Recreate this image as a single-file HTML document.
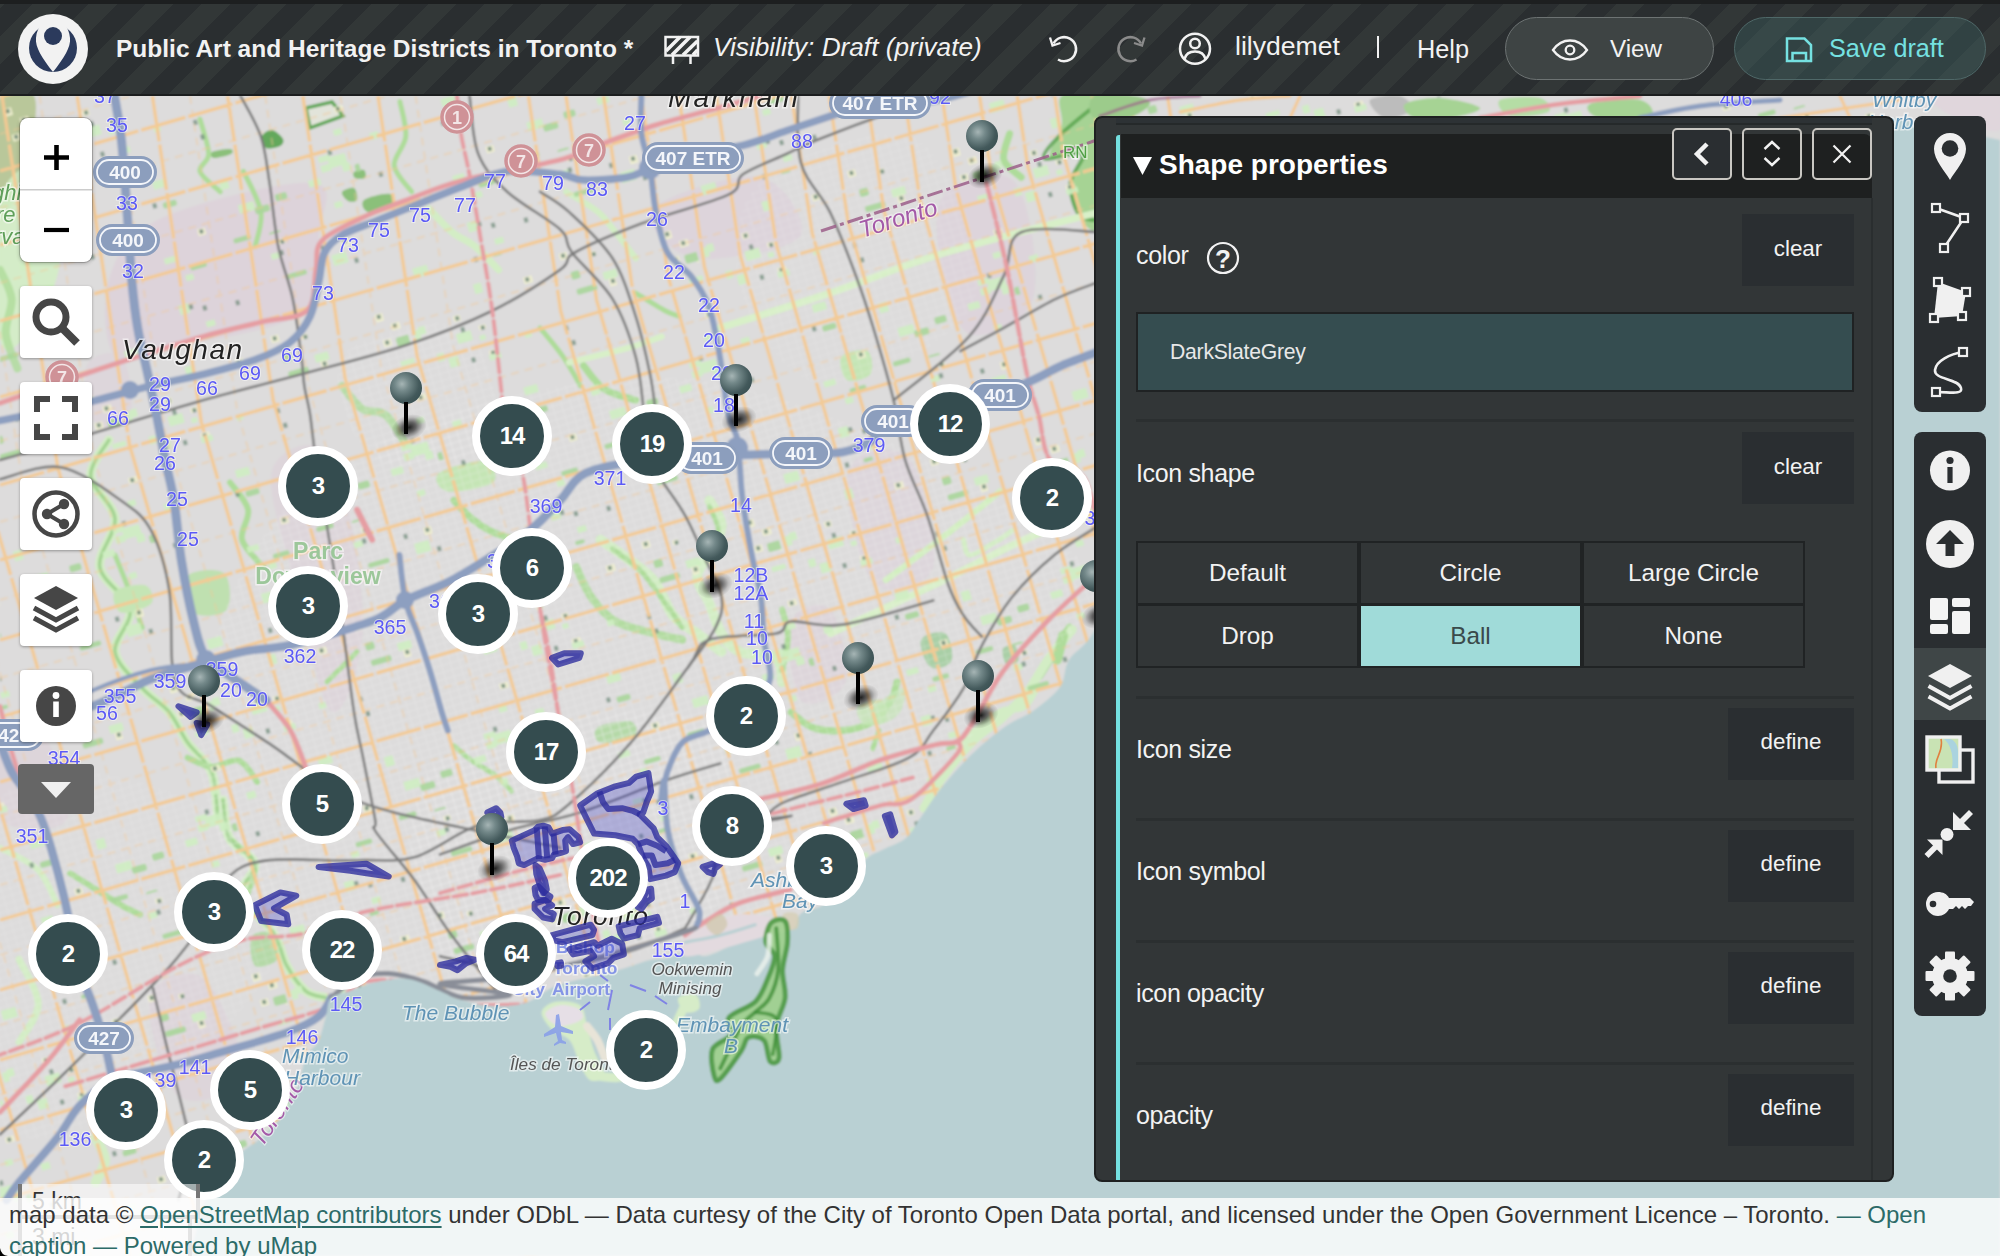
<!DOCTYPE html>
<html lang="en">
<head>
<meta charset="utf-8">
<title>Public Art and Heritage Districts in Toronto - uMap</title>
<style>
*{box-sizing:border-box;margin:0;padding:0}
html,body{width:2000px;height:1256px;overflow:hidden;background:#dcdcdc;font-family:"Liberation Sans",sans-serif;}
body{position:relative}
.abs{position:absolute}
/* ---------- top bar ---------- */
#topstrip{position:absolute;left:0;top:0;width:2000px;height:4px;background:#1d1f20;z-index:50}
#bar{position:absolute;left:0;top:4px;width:2000px;height:92px;z-index:49;
 background:repeating-linear-gradient(135deg,#323737 0,#323737 2.83px,#2a2e30 2.83px,#2a2e30 22.83px,#323737 22.83px,#323737 40px);
 border-bottom:2px solid #1b1d1e;color:#f2f2f2}
#bar .t{position:absolute;white-space:nowrap;line-height:1}
#logo{position:absolute;left:18px;top:10px;width:70px;height:70px}
.pill{position:absolute;top:13px;height:63px;border-radius:32px;border:1px solid #6d7373}
/* ---------- map ---------- */
#map{position:absolute;left:0;top:96px;width:2000px;height:1160px;overflow:hidden;background:#dddcdc}
#mapsvg{position:absolute;left:0;top:-96px}
/* leaflet-like controls */
.ctl{position:absolute;left:20px;width:72px;height:72px;background:#fff;border-radius:4px;box-shadow:0 1px 3px rgba(0,0,0,.35);z-index:20}
.ctl svg{position:absolute;left:0;top:0}
/* clusters */
.cl{position:absolute;width:80px;height:80px;margin:-39px 0 0 -39px;border-radius:50%;background:#344c4f;border:8px solid #fff;
 color:#fff;font-weight:bold;font-size:24px;line-height:64px;text-align:center;z-index:10;letter-spacing:-1px}
/* ball markers */
.ball{position:absolute;width:32px;height:32px;margin:-15px 0 0 -15px;border-radius:50%;z-index:9;
 background:radial-gradient(circle at 12px 12px,#a6b5b5 0,#74898a 25%,#43595b 60%,#2f4648 100%)}
.ball:before{content:"";position:absolute;left:14px;top:30px;width:4px;height:32px;background:#000}
.ball:after{content:"";position:absolute;left:1px;top:43px;width:36px;height:25px;border-radius:50%;
 background:radial-gradient(ellipse at center,rgba(0,0,0,.85) 0,rgba(0,0,0,.55) 28%,rgba(0,0,0,.15) 55%,rgba(0,0,0,0) 72%);transform:rotate(-20deg);z-index:-1}
/* ---------- panel ---------- */
#panel{position:absolute;left:1094px;top:116px;width:800px;height:1066px;background:#323637;border:2px solid #1e2021;border-radius:8px;z-index:30;color:#f2f2f2;overflow:hidden}
#panel .lbl{position:absolute;left:40px;font-size:25px;letter-spacing:-.35px;line-height:1;white-space:nowrap}
#panel .sep{position:absolute;left:40px;width:718px;height:3px;background:#2b2f30}
#panel .btn{position:absolute;background:#2a2e31;font-size:22.4px;text-align:center;white-space:nowrap}
.hb{position:absolute;top:9.5px;width:60px;height:52px;border:2px solid #c9c7c2;border-radius:5px}
.cell{position:absolute;width:223px;height:64px;border:2px solid #202324;font-size:24.3px;line-height:59px;text-align:center;color:#f2f2f2}
/* ---------- toolbars ---------- */
.tb{position:absolute;left:1914px;width:72px;background:#2a2e31;border-radius:8px;z-index:30}
/* ---------- attribution ---------- */
#attr{position:absolute;left:0;top:1198px;width:2000px;height:58px;background:rgba(255,255,255,.8);z-index:40;color:#333;font-size:24px;line-height:31px;padding:1px 0 0 9px;white-space:nowrap}
#attr .lk{color:#2c6b68}
#attr u{text-decoration-thickness:2px;text-underline-offset:3px}
</style>
</head>
<body>
<div id="topstrip"></div>
<div id="bar">
  <svg id="logo" viewBox="0 0 70 70">
    <circle cx="35" cy="35" r="35" fill="#f2f2f2"/>
    <circle cx="35" cy="34" r="24" fill="#2b3a5c"/>
    <path d="M35 58 C 24 44 17 33 18 24 C 19 12 26 6 35 6 C 44 6 51 12 52 24 C 53 33 46 44 35 58 Z" fill="#f2f2f2"/>
    <circle cx="35" cy="22" r="9" fill="#2b3a5c"/>
  </svg>
  <div class="t" id="title" style="left:116px;top:33.3px;font-size:24.5px;font-weight:bold;">Public Art and Heritage Districts in Toronto *</div>
  <div class="t" id="vis" style="left:713px;top:30.3px;font-size:26.2px;font-style:italic;">Visibility: Draft (private)</div>
  <div class="t" id="user" style="left:1235px;top:29px;font-size:26.6px;">lilydemet</div>
  <div class="abs" id="pipe" style="left:1376.5px;top:31.5px;width:2.2px;height:22.5px;background:#f2f2f2"></div>
  <div class="t" id="help" style="left:1417px;top:32.6px;font-size:25.3px;">Help</div>
  <div class="pill" style="left:1505px;width:209px;background:#3e4444"></div>
  <div class="pill" style="left:1734px;width:252px;background:rgba(70,120,120,.28);border-color:#4f6868"></div>
  <svg class="abs" id="topicons" style="left:0;top:-4px" width="2000" height="96" viewBox="0 0 2000 96" fill="none" stroke="#f2f2f2" stroke-width="2.5">
    <!-- barrier -->
    <rect x="665.500" y="37" width="32.500" height="18.500"/>
    <path d="M673 55.500V64M690.500 55.500V64"/>
    <path d="M666 51L680 37M672 55L690 37M683 55L697.500 41M693 55L697.500 50" stroke-width="3.6"/>
    <!-- undo -->
    <path d="M1053.500 43.500A12 12 0 1 1 1058 59.500"/>
    <path d="M1050 37.500L1052.500 45.500L1060.500 43" stroke-width="2.3"/>
    <!-- redo -->
    <g stroke="#8b8b8b"><path d="M1141 43.500A12 12 0 1 0 1136.500 59.500"/><path d="M1144.500 37.500L1142 45.500L1134 43" stroke-width="2.3"/></g>
    <!-- user -->
    <circle cx="1195" cy="48.800" r="15"/>
    <circle cx="1195" cy="43.500" r="4.800"/>
    <path d="M1184.500 59C1186 53 1191 51.500 1195 51.500C1199 51.500 1204 53 1205.500 59"/>
    <!-- eye -->
    <path d="M1553 50C1558 43 1564 40.500 1570 40.500C1576 40.500 1582 43 1587 50C1582 57 1576 59.500 1570 59.500C1564 59.500 1558 57 1553 50Z" stroke-width="2.3"/>
    <circle cx="1570" cy="50" r="4.300" stroke-width="2.300"/>
    <!-- save -->
    <g stroke="#75e1e1"><path d="M1787 38.500H1804.500L1811 45V61H1787Z"/><path d="M1792.500 61V53H1806V61"/></g>
  </svg>
  <div class="t" id="view" style="left:1610px;top:32.5px;font-size:24.2px;">View</div>
  <div class="t" id="save" style="left:1829px;top:31.7px;font-size:25.2px;color:#75e1e1">Save draft</div>
</div>

<div id="map">
<svg id="mapsvg" width="2000" height="1256" viewBox="0 0 2000 1256"><g filter="url(#soft)">
  <rect width="2000" height="1256" fill="#dddcdc"/>
  <!--MAP-->
<path d="M162.3 217.7 C196.1 202.2 286.9 180.1 313.0 183.0 C339.1 185.9 319.8 213.8 318.8 235.1 C317.8 256.4 329.4 292.1 307.2 310.5 C285.0 328.9 217.4 337.6 185.5 345.3 C153.6 353.0 128.5 368.5 115.9 356.9 C103.3 345.3 102.4 298.9 110.1 275.7 C117.8 252.5 128.5 233.1 162.3 217.7Z" fill="#ddd3da" opacity="1"/>
<path d="M272.3 470.3 C278.4 448.1 317.7 433.0 332.8 458.2 C347.9 483.4 363.1 579.1 363.1 621.5 C363.1 663.9 343.9 717.3 332.8 712.3 C321.7 707.3 306.6 631.6 296.5 591.3 C286.4 551.0 266.2 492.5 272.3 470.3Z" fill="#ddd3da" opacity="0.8"/>
<path d="M655.9 206.1 C670.9 194.5 736.1 172.4 760.3 177.2 C784.5 182.0 807.7 221.6 800.9 235.1 C794.1 248.6 741.5 256.4 719.7 258.3 C698.0 260.2 681.0 255.4 670.4 246.7 C659.8 238.0 640.9 217.7 655.9 206.1Z" fill="#ddd3da" opacity="0.9"/>
<path d="M945.8 191.7 C958.4 179.1 1000.9 165.1 1015.4 183.0 C1029.9 200.9 1040.5 273.8 1032.8 298.9 C1025.1 324.0 984.5 340.5 969.0 333.7 C953.5 326.9 943.9 282.0 940.0 258.3 C936.1 234.6 933.2 204.2 945.8 191.7Z" fill="#ddd3da" opacity="0.9"/>
<path d="M791.1 621.5 C796.1 606.4 821.4 599.3 830.5 609.4 C839.6 619.5 850.6 667.0 845.6 682.1 C840.6 697.2 809.3 710.3 800.2 700.2 C791.1 690.1 786.1 636.6 791.1 621.5Z" fill="#ddd3da" opacity="0.8"/>
<path d="M848.6 470.3 C854.7 449.6 895.0 442.1 909.1 458.2 C923.2 474.3 939.3 546.4 933.3 567.1 C927.2 587.8 886.9 598.3 872.8 582.2 C858.7 566.1 842.5 491.0 848.6 470.3Z" fill="#ddd3da" opacity="0.7"/>
<path d="M149.7 997.5 C153.9 977.9 188.5 965.6 203.9 978.4 C219.3 991.1 246.3 1054.3 242.1 1074.0 C237.8 1093.7 193.8 1109.0 178.4 1096.3 C163.0 1083.5 145.4 1017.1 149.7 997.5Z" fill="#ddd3da" opacity="0.8"/>
<path d="M0.0 751.6 C7.6 738.2 34.3 728.1 45.4 739.5 C56.5 750.9 74.2 806.6 66.6 820.0 C59.0 833.4 11.1 831.4 0.0 820.0 C-11.1 808.6 -7.6 765.0 0.0 751.6Z" fill="#ddd3da" opacity="0.8"/>
<path d="M87.0 365.6 C91.3 354.5 114.5 348.7 121.7 356.9 C128.9 365.1 134.7 403.7 130.4 414.8 C126.1 425.9 102.9 431.7 95.7 423.5 C88.5 415.3 82.7 376.7 87.0 365.6Z" fill="#ddd3da" opacity="0.7"/>
<path d="M0.0 96.0 C5.7 77.0 29.0 87.0 34.0 96.0 C39.0 105.0 33.3 132.7 30.0 150.0 C26.7 167.3 19.0 190.0 14.0 200.0 C9.0 210.0 2.3 227.3 0.0 210.0 C-2.3 192.7 -5.7 115.0 0.0 96.0Z" fill="#b9c79a" opacity="1"/>
<path d="M0.0 200.0 C6.7 171.7 30.0 160.0 40.0 170.0 C50.0 180.0 61.7 233.3 60.0 260.0 C58.3 286.7 40.0 316.7 30.0 330.0 C20.0 343.3 5.0 361.7 0.0 340.0 C-5.0 318.3 -6.7 228.3 0.0 200.0Z" fill="#d3edc5" opacity="0.9"/>
<path d="M1061.7 96.0 C1068.1 91.2 1093.6 75.2 1100.0 96.0 C1106.4 116.8 1103.5 200.3 1100.0 220.6 C1096.5 240.9 1084.0 224.0 1079.1 217.7 C1074.2 211.4 1069.9 193.6 1070.4 183.0 C1070.9 172.4 1085.4 158.3 1082.0 154.0 C1078.6 149.7 1053.5 161.7 1050.1 156.9 C1046.7 152.1 1059.8 135.2 1061.7 125.0 C1063.6 114.8 1055.3 100.8 1061.7 96.0Z" fill="#a6d394" opacity="1"/>
<path d="M1100.0 101.8 C1093.6 107.1 1071.0 124.3 1061.7 133.7 C1052.4 143.1 1040.9 154.9 1044.3 158.3 C1047.7 161.7 1077.7 149.9 1082.0 154.0 C1086.3 158.1 1070.9 172.9 1070.4 183.0 C1069.9 193.1 1074.2 208.5 1079.1 214.8 C1084.0 221.1 1096.5 219.6 1100.0 220.6" fill="none" stroke="#4f9f45" stroke-width="4" opacity=".75"/>
<path d="M306.0 108.0 L332.0 102.0 L343.0 116.0 L310.0 128.0Z" fill="#e4e6da" stroke="#4f9f45" stroke-width="3.5" opacity=".85"/>
<path d="M262.0 136.0 C263.0 133.0 268.5 129.5 272.0 130.0 C275.5 130.5 281.7 136.3 283.0 139.0 C284.3 141.7 282.8 144.5 280.0 146.0 C277.2 147.5 269.0 149.7 266.0 148.0 C263.0 146.3 261.0 139.0 262.0 136.0Z" fill="#4f9f45" opacity="0.85"/>
<path d="M364.0 200.0 C367.7 197.0 385.3 192.7 390.0 194.0 C394.7 195.3 395.7 205.0 392.0 208.0 C388.3 211.0 372.7 213.3 368.0 212.0 C363.3 210.7 360.3 203.0 364.0 200.0Z" fill="#8bc07a" opacity="1"/>
<path d="M354.0 172.0 C355.5 170.7 362.2 169.0 364.0 170.0 C365.8 171.0 366.5 176.7 365.0 178.0 C363.5 179.3 356.8 179.0 355.0 178.0 C353.2 177.0 352.5 173.3 354.0 172.0Z" fill="#8bc07a" opacity="1"/>
<path d="M342.0 192.0 C343.0 189.8 351.5 186.7 354.0 188.0 C356.5 189.3 358.0 197.8 357.0 200.0 C356.0 202.2 350.5 202.3 348.0 201.0 C345.5 199.7 341.0 194.2 342.0 192.0Z" fill="#8bc07a" opacity="1"/>
<path d="M212.0 152.0 C214.7 150.5 226.8 148.7 230.0 149.0 C233.2 149.3 233.7 152.5 231.0 154.0 C228.3 155.5 217.2 158.3 214.0 158.0 C210.8 157.7 209.3 153.5 212.0 152.0Z" fill="#8bc07a" opacity="1"/>
<path d="M108.9 440.0 C105.9 446.1 89.8 463.2 90.8 476.3 C91.8 489.4 113.5 503.6 115.0 518.7 C116.5 533.8 97.3 552.0 99.8 567.1 C102.3 582.2 127.6 595.3 130.1 609.4 C132.6 623.5 113.0 638.7 115.0 651.8 C117.0 664.9 133.1 678.0 142.2 688.1 C151.3 698.2 161.8 703.2 169.4 712.3 C177.0 721.4 180.5 732.5 187.6 742.6 C194.7 752.7 206.8 759.9 211.8 772.8 C216.9 785.7 216.9 812.1 217.9 820.0" fill="none" stroke="#d3edc5" stroke-width="9" stroke-linecap="round" stroke-linejoin="round" opacity="1"/>
<path d="M115.0 555.0 C117.0 560.0 122.6 573.1 127.1 585.2 C131.6 597.3 139.7 620.5 142.2 627.6" fill="none" stroke="#aedc9a" stroke-width="5" stroke-linecap="round" stroke-linejoin="round" opacity="1"/>
<path d="M223.0 800.0 C224.1 806.4 224.1 827.6 229.4 838.2 C234.7 848.8 252.8 854.1 254.9 863.7 C257.0 873.3 238.9 883.9 242.1 895.6 C245.3 907.3 266.6 922.1 274.0 933.8 C281.4 945.5 281.4 956.2 286.7 965.7 C292.0 975.2 299.4 985.8 305.8 991.1 C312.2 996.4 321.7 996.4 324.9 997.5" fill="none" stroke="#d3edc5" stroke-width="9" stroke-linecap="round" stroke-linejoin="round" opacity="1"/>
<path d="M229.4 838.2 C233.7 842.5 251.7 854.7 254.9 863.7 C258.1 872.7 249.6 887.6 248.5 892.4" fill="none" stroke="#aedc9a" stroke-width="5" stroke-linecap="round" stroke-linejoin="round" opacity="1"/>
<path d="M108.9 440.0 C105.9 446.1 89.8 463.2 90.8 476.3 C91.8 489.4 113.5 503.6 115.0 518.7 C116.5 533.8 97.3 552.0 99.8 567.1 C102.3 582.2 127.6 595.3 130.1 609.4 C132.6 623.5 113.0 638.7 115.0 651.8 C117.0 664.9 133.1 678.0 142.2 688.1 C151.3 698.2 161.8 703.2 169.4 712.3 C177.0 721.4 180.5 732.5 187.6 742.6 C194.7 752.7 206.8 759.9 211.8 772.8 C216.9 785.7 216.9 812.1 217.9 820.0" fill="none" stroke="#9fd08d" stroke-width="3.5" stroke-linecap="round" stroke-linejoin="round" opacity="0.9"/>
<path d="M223.0 800.0 C224.1 806.4 224.1 827.6 229.4 838.2 C234.7 848.8 252.8 854.1 254.9 863.7 C257.0 873.3 238.9 883.9 242.1 895.6 C245.3 907.3 266.6 922.1 274.0 933.8 C281.4 945.5 281.4 956.2 286.7 965.7 C292.0 975.2 299.4 985.8 305.8 991.1 C312.2 996.4 321.7 996.4 324.9 997.5" fill="none" stroke="#9fd08d" stroke-width="3.5" stroke-linecap="round" stroke-linejoin="round" opacity="0.9"/>
<path d="M709.4 500.5 C711.4 504.5 721.0 516.6 721.5 524.7 C722.0 532.8 716.5 540.3 712.5 548.9 C708.5 557.5 697.8 567.1 697.3 576.2 C696.8 585.3 705.4 593.8 709.4 603.4 C713.4 613.0 716.5 625.5 721.5 633.6 C726.5 641.7 730.6 647.8 739.7 651.8 C748.8 655.8 768.9 652.8 776.0 657.9 C783.1 663.0 781.1 678.1 782.1 682.1" fill="none" stroke="#9fd08d" stroke-width="4" stroke-linecap="round" stroke-linejoin="round" opacity="0.9"/>
<path d="M600.5 539.8 C605.5 543.3 621.7 553.9 630.8 561.0 C639.9 568.1 648.0 573.1 655.0 582.2 C662.0 591.3 666.1 606.9 673.1 615.5 C680.1 624.1 689.2 627.6 697.3 633.6 C705.4 639.6 717.5 648.8 721.5 651.8" fill="none" stroke="#9fd08d" stroke-width="4" stroke-linecap="round" stroke-linejoin="round" opacity="0.9"/>
<path d="M230.0 482.4 C233.0 486.9 246.1 500.0 248.1 509.6 C250.1 519.2 239.6 530.2 242.1 539.8 C244.6 549.4 259.7 562.5 263.2 567.1" fill="none" stroke="#aedc9a" stroke-width="6" stroke-linecap="round" stroke-linejoin="round" opacity="1"/>
<path d="M453.9 500.5 C456.9 503.5 465.9 513.7 472.0 518.7 C478.1 523.8 483.1 527.3 490.2 530.8 C497.3 534.3 510.4 538.3 514.4 539.8" fill="none" stroke="#aedc9a" stroke-width="7" stroke-linecap="round" stroke-linejoin="round" opacity="1"/>
<path d="M357.0 651.8 C354.0 654.8 343.9 665.0 338.9 670.0 C333.9 675.0 328.8 680.1 326.8 682.1" fill="none" stroke="#aedc9a" stroke-width="5" stroke-linecap="round" stroke-linejoin="round" opacity="1"/>
<path d="M187.6 757.7 C191.6 759.2 203.2 766.3 211.8 766.8 C220.4 767.3 231.4 758.2 239.0 760.7 C246.6 763.2 254.2 778.4 257.2 781.9" fill="none" stroke="#aedc9a" stroke-width="6" stroke-linecap="round" stroke-linejoin="round" opacity="1"/>
<path d="M453.9 745.6 C456.9 748.1 464.9 755.7 472.0 760.7 C479.1 765.8 489.6 770.9 496.2 775.9 C502.8 780.9 508.8 788.5 511.3 791.0" fill="none" stroke="#aedc9a" stroke-width="5" stroke-linecap="round" stroke-linejoin="round" opacity="1"/>
<path d="M709.4 500.5 C711.4 504.5 721.0 516.6 721.5 524.7 C722.0 532.8 716.5 540.3 712.5 548.9 C708.5 557.5 697.8 567.1 697.3 576.2 C696.8 585.3 705.4 593.8 709.4 603.4 C713.4 613.0 716.5 625.5 721.5 633.6 C726.5 641.7 730.6 647.8 739.7 651.8 C748.8 655.8 768.9 652.8 776.0 657.9 C783.1 663.0 781.1 678.1 782.1 682.1" fill="none" stroke="#d3edc5" stroke-width="10" stroke-linecap="round" stroke-linejoin="round" opacity="1"/>
<path d="M600.5 539.8 C605.5 543.3 621.7 553.9 630.8 561.0 C639.9 568.1 648.0 573.1 655.0 582.2 C662.0 591.3 666.1 606.9 673.1 615.5 C680.1 624.1 689.2 627.6 697.3 633.6 C705.4 639.6 717.5 648.8 721.5 651.8" fill="none" stroke="#d3edc5" stroke-width="10" stroke-linecap="round" stroke-linejoin="round" opacity="1"/>
<path d="M612.6 548.9 C617.1 552.4 631.7 562.0 639.8 570.1 C647.9 578.2 653.9 587.7 661.0 597.3 C668.1 606.9 678.7 622.5 682.2 627.6" fill="none" stroke="#aedc9a" stroke-width="5" stroke-linecap="round" stroke-linejoin="round" opacity="1"/>
<path d="M576.3 567.1 C578.8 572.1 584.8 588.2 591.4 597.3 C598.0 606.4 605.0 615.5 615.6 621.5 C626.2 627.5 643.9 630.6 655.0 633.6 C666.1 636.6 677.7 638.7 682.2 639.7" fill="none" stroke="#aedc9a" stroke-width="8" stroke-linecap="round" stroke-linejoin="round" opacity="0.9"/>
<path d="M782.1 609.4 C783.1 614.0 788.1 626.6 788.1 636.7 C788.1 646.8 783.1 664.5 782.1 670.0" fill="none" stroke="#aedc9a" stroke-width="6" stroke-linecap="round" stroke-linejoin="round" opacity="1"/>
<path d="M709.4 506.6 C710.9 510.6 718.5 522.7 718.5 530.8 C718.5 538.9 710.9 551.0 709.4 555.0" fill="none" stroke="#aedc9a" stroke-width="5" stroke-linecap="round" stroke-linejoin="round" opacity="1"/>
<path d="M791.1 712.3 C794.6 714.8 803.7 724.4 812.3 727.4 C820.9 730.4 832.5 731.5 842.6 730.5 C852.7 729.5 864.7 726.4 872.8 721.4 C880.9 716.4 887.0 706.8 891.0 700.2 C895.0 693.7 896.0 685.1 897.0 682.1" fill="none" stroke="#aedc9a" stroke-width="7" stroke-linecap="round" stroke-linejoin="round" opacity="1"/>
<path d="M878.9 730.5 L872.8 748.6" fill="none" stroke="#aedc9a" stroke-width="5" stroke-linecap="round" stroke-linejoin="round" opacity="1"/>
<path d="M1012.0 530.8 C1009.0 532.8 1000.9 538.9 993.9 542.9 C986.9 546.9 974.8 555.5 969.7 555.0 C964.7 554.5 964.6 542.3 963.6 539.8" fill="none" stroke="#d3edc5" stroke-width="5" stroke-linecap="round" stroke-linejoin="round" opacity="1"/>
<path d="M1036.2 688.1 C1034.2 691.1 1030.1 702.3 1024.1 706.3 C1018.0 710.3 1008.0 708.3 999.9 712.3 C991.8 716.3 981.8 725.0 975.7 730.5 C969.7 736.0 965.6 743.1 963.6 745.6" fill="none" stroke="#d3edc5" stroke-width="7" stroke-linecap="round" stroke-linejoin="round" opacity="1"/>
<path d="M1069.5 627.6 C1067.0 631.6 1059.5 643.7 1054.4 651.8 C1049.4 659.9 1041.7 672.0 1039.2 676.0" fill="none" stroke="#aedc9a" stroke-width="8" stroke-linecap="round" stroke-linejoin="round" opacity="1"/>
<path d="M200.0 119.2 C201.4 125.0 208.7 145.3 208.7 154.0 C208.7 162.7 198.1 165.1 200.0 171.4 C201.9 177.7 216.9 188.3 220.3 191.7" fill="none" stroke="#aedc9a" stroke-width="5" stroke-linecap="round" stroke-linejoin="round" opacity="1"/>
<path d="M243.5 171.4 C246.4 178.2 259.0 199.4 260.9 211.9 C262.8 224.4 256.1 240.9 255.1 246.7" fill="none" stroke="#aedc9a" stroke-width="5" stroke-linecap="round" stroke-linejoin="round" opacity="1"/>
<path d="M400.0 101.8 C401.0 107.6 406.8 126.0 405.8 136.6 C404.8 147.2 393.2 156.4 394.2 165.6 C395.2 174.8 408.7 187.3 411.6 191.7" fill="none" stroke="#aedc9a" stroke-width="5" stroke-linecap="round" stroke-linejoin="round" opacity="1"/>
<path d="M429.0 209.0 C432.9 212.9 444.5 225.9 452.2 232.2 C459.9 238.5 467.7 240.4 475.4 246.7 C483.1 253.0 494.7 266.0 498.6 269.9" fill="none" stroke="#d3edc5" stroke-width="7" stroke-linecap="round" stroke-linejoin="round" opacity="1"/>
<path d="M342.0 385.9 C345.4 389.8 355.1 404.2 362.3 409.0 C369.6 413.8 378.2 409.0 385.5 414.8 C392.8 420.6 402.4 439.0 405.8 443.8" fill="none" stroke="#aedc9a" stroke-width="8" stroke-linecap="round" stroke-linejoin="round" opacity="0.8"/>
<path d="M0.0 269.9 C1.9 274.7 10.6 288.3 11.6 298.9 C12.6 309.5 4.8 322.1 5.8 333.7 C6.8 345.3 15.5 362.7 17.4 368.5" fill="none" stroke="#aedc9a" stroke-width="8" stroke-linecap="round" stroke-linejoin="round" opacity="0.8"/>
<path d="M566.1 191.7 C571.4 195.1 589.8 205.2 598.0 211.9 C606.2 218.7 609.1 224.5 615.4 232.2 C621.7 239.9 632.3 254.0 635.7 258.3" fill="none" stroke="#d3edc5" stroke-width="6" stroke-linecap="round" stroke-linejoin="round" opacity="1"/>
<path d="M635.7 293.1 C640.5 296.0 657.4 306.6 664.6 310.5 C671.8 314.4 676.7 315.3 679.1 316.3" fill="none" stroke="#aedc9a" stroke-width="5" stroke-linecap="round" stroke-linejoin="round" opacity="1"/>
<path d="M583.5 365.6 C586.9 369.5 595.1 383.0 603.8 388.8 C612.5 394.6 630.4 398.4 635.7 400.3" fill="none" stroke="#aedc9a" stroke-width="7" stroke-linecap="round" stroke-linejoin="round" opacity="1"/>
<path d="M540.0 327.9 C543.9 332.7 556.4 347.2 563.2 356.9 C570.0 366.6 577.7 381.1 580.6 385.9" fill="none" stroke="#aedc9a" stroke-width="5" stroke-linecap="round" stroke-linejoin="round" opacity="1"/>
<path d="M1009.6 133.7 C1008.6 138.0 1001.9 152.6 1003.8 159.8 C1005.7 167.1 1018.3 174.3 1021.2 177.2" fill="none" stroke="#aedc9a" stroke-width="7" stroke-linecap="round" stroke-linejoin="round" opacity="1"/>
<path d="M719.7 327.9 C738.1 322.1 792.2 305.7 829.9 293.1 C867.6 280.5 900.8 266.0 945.8 252.5 C990.8 239.0 1074.3 218.7 1100.0 211.9" fill="none" stroke="#d8f0c8" stroke-width="7" stroke-linecap="round" stroke-linejoin="round" opacity="1"/>
<path d="M830.5 633.6 C847.6 625.5 901.0 600.8 933.3 585.2 C965.6 569.6 996.3 552.4 1024.1 539.8 C1051.9 527.2 1087.4 514.6 1100.1 509.6" fill="none" stroke="#d8f0c8" stroke-width="7" stroke-linecap="round" stroke-linejoin="round" opacity="1"/>
<path d="M569.0 362.7 C578.7 360.3 611.5 352.5 627.0 348.2 C642.5 343.9 655.9 338.5 661.7 336.6" fill="none" stroke="#d8f0c8" stroke-width="6" stroke-linecap="round" stroke-linejoin="round" opacity="1"/>
<path d="M885.9 580.0 C892.4 575.1 912.2 560.5 925.1 550.7 C938.0 540.9 950.8 531.0 963.3 521.1 C975.8 511.2 993.8 496.4 999.9 491.5" fill="none" stroke="#d2efc0" stroke-width="6" stroke-linecap="round" stroke-linejoin="round" opacity="1"/>
<path d="M187.6 576.2 C192.7 569.6 217.3 567.6 223.9 573.1 C230.5 578.6 232.0 602.8 226.9 609.4 C221.8 616.0 200.2 618.0 193.6 612.5 C187.0 607.0 182.5 582.8 187.6 576.2Z" fill="#bfe0b0" opacity="1"/>
<path d="M251.7 937.0 C254.3 931.7 266.6 930.1 270.8 933.8 C275.1 937.5 279.8 954.0 277.2 959.3 C274.6 964.6 259.1 969.4 254.9 965.7 C250.7 962.0 249.0 942.3 251.7 937.0Z" fill="#b5d9a8" opacity="1"/>
<path d="M921.2 639.7 C923.7 634.2 940.4 630.1 945.4 633.6 C950.4 637.1 954.0 655.4 951.5 660.9 C949.0 666.4 935.3 670.4 930.3 666.9 C925.2 663.4 918.7 645.2 921.2 639.7Z" fill="#a9cfa6" opacity="1"/>
<path d="M1002.9 648.8 C1004.4 645.8 1012.5 643.7 1015.0 645.7 C1017.5 647.7 1019.6 657.9 1018.1 660.9 C1016.6 663.9 1008.5 665.9 1006.0 663.9 C1003.5 661.9 1001.4 651.8 1002.9 648.8Z" fill="#a9cfa6" opacity="1"/>
<path d="M597.5 727.4 C602.5 723.9 624.8 719.9 630.8 721.4 C636.8 722.9 638.8 733.0 633.8 736.5 C628.8 740.0 606.5 744.1 600.5 742.6 C594.5 741.1 592.5 730.9 597.5 727.4Z" fill="#b5d9a8" opacity="1"/>
<path d="M857.7 706.3 C860.7 702.3 877.4 697.7 881.9 700.2 C886.4 702.7 887.9 717.4 884.9 721.4 C881.9 725.4 868.3 726.9 863.8 724.4 C859.3 721.9 854.7 710.3 857.7 706.3Z" fill="#c5e5b5" opacity="0.8"/>
<path d="M438.7 473.3 C444.8 468.3 475.0 459.7 484.1 461.2 C493.2 462.7 499.2 477.4 493.2 482.4 C487.1 487.4 456.9 492.9 447.8 491.4 C438.7 489.9 432.6 478.3 438.7 473.3Z" fill="#c5e5b5" opacity="1"/>
<path d="M115.0 591.3 C119.0 586.8 139.1 583.2 145.2 585.2 C151.2 587.2 155.3 598.9 151.3 603.4 C147.3 607.9 127.0 614.5 121.0 612.5 C115.0 610.5 111.0 595.8 115.0 591.3Z" fill="#c5e5b5" opacity="1"/>
<path d="M841.4 356.9 C844.8 352.1 862.7 348.2 867.5 351.1 C872.3 354.0 873.8 369.5 870.4 374.3 C867.0 379.1 852.0 383.0 847.2 380.1 C842.4 377.2 838.0 361.7 841.4 356.9Z" fill="#c5e5b5" opacity="1"/>
<path d="M872.8 709.3 C876.8 703.2 898.5 687.6 903.1 688.1 C907.7 688.6 904.1 706.2 900.1 712.3 C896.1 718.3 883.5 724.9 878.9 724.4 C874.3 723.9 868.8 715.3 872.8 709.3Z" fill="#c5e5b5" opacity="0.7"/>
<path d="M1072.2 629.6 C1068.2 634.6 1055.6 649.2 1048.0 659.8 C1040.4 670.4 1034.4 683.5 1026.8 693.1 C1019.2 702.7 1011.7 709.2 1002.6 717.3 C993.5 725.4 982.4 731.4 972.3 741.5 C962.2 751.6 950.2 766.8 942.1 777.9 C934.0 789.0 926.9 803.1 923.9 808.1" fill="none" stroke="#d3edc5" stroke-width="9" stroke-linecap="round" stroke-linejoin="round" opacity="1"/>
<path d="M1063.1 635.6 L1057.0 659.8" fill="none" stroke="#aedc9a" stroke-width="10" stroke-linecap="round" stroke-linejoin="round" opacity="1"/>
<path d="M19.1 959.3 C22.3 966.7 38.2 990.1 38.2 1003.9 C38.2 1017.7 22.3 1035.7 19.1 1042.1" fill="none" stroke="#d3edc5" stroke-width="7" stroke-linecap="round" stroke-linejoin="round" opacity="1"/>
<path d="M0.0 847.8 C6.4 851.5 28.7 860.5 38.2 870.1 C47.8 879.7 54.1 899.3 57.3 905.1" fill="none" stroke="#d3edc5" stroke-width="6" stroke-linecap="round" stroke-linejoin="round" opacity="1"/>
<path d="M70.1 873.3 C74.3 875.9 87.1 883.9 95.6 889.2 C104.1 894.5 113.7 900.9 121.1 905.1 C128.5 909.4 137.0 913.1 140.2 914.7" fill="none" stroke="#aedc9a" stroke-width="6" stroke-linecap="round" stroke-linejoin="round" opacity="1"/>
<path d="M95.6 1137.7 C97.2 1141.4 105.1 1152.6 105.1 1160.0 C105.1 1167.4 97.2 1178.6 95.6 1182.3" fill="none" stroke="#d3edc5" stroke-width="10" stroke-linecap="round" stroke-linejoin="round" opacity="1"/>
<defs><pattern id="specks" width="300" height="300" patternUnits="userSpaceOnUse" patternTransform="rotate(-16)"><rect x="97" y="45" width="4" height="5" fill="#6d8a78" opacity=".8"/><rect x="22" y="161" width="7" height="8" fill="#cfeec2"/><rect x="11" y="130" width="7" height="8" fill="#cfeec2"/><rect x="248" y="37" width="15" height="11" fill="#cfeec2"/><rect x="173" y="119" width="9" height="8" rx="2" fill="#a9d69a"/><rect x="87" y="43" width="10" height="10" fill="#cfeec2"/><rect x="54" y="174" width="4" height="5" fill="#6d8a78" opacity=".8"/><rect x="112" y="164" width="7" height="6" fill="#cfeec2"/><rect x="204" y="128" width="14" height="8" fill="#cfeec2"/><rect x="90" y="238" width="4" height="5" fill="#6d8a78" opacity=".8"/><rect x="73" y="172" width="9" height="7" fill="#efefcf"/><rect x="75" y="173" width="3.5" height="4" fill="#6d8a78"/><rect x="86" y="294" width="12" height="10" fill="#cfeec2"/><rect x="46" y="147" width="15" height="10" fill="#cfeec2"/><rect x="172" y="263" width="16" height="9" fill="#cfeec2"/><rect x="174" y="137" width="21" height="6" rx="2" fill="#a9d69a"/><rect x="199" y="18" width="4" height="5" fill="#6d8a78" opacity=".8"/><rect x="194" y="298" width="12" height="6" rx="2" fill="#a9d69a"/><rect x="201" y="7" width="7" height="5" fill="#efefcf"/><rect x="203" y="8" width="3.5" height="4" fill="#6d8a78"/><rect x="18" y="230" width="9" height="7" fill="#cfeec2"/><rect x="261" y="24" width="8" height="8" fill="#efefcf"/><rect x="263" y="25" width="3.5" height="4" fill="#6d8a78"/><rect x="246" y="259" width="12" height="7" fill="#cfeec2"/><rect x="265" y="287" width="8" height="6" fill="#cfeec2"/><rect x="70" y="145" width="7" height="5" fill="#efefcf"/><rect x="72" y="146" width="3.5" height="4" fill="#6d8a78"/><rect x="126" y="111" width="9" height="7" fill="#efefcf"/><rect x="128" y="112" width="3.5" height="4" fill="#6d8a78"/><rect x="155" y="185" width="4" height="5" fill="#6d8a78" opacity=".8"/><rect x="16" y="270" width="4" height="5" fill="#6d8a78" opacity=".8"/><rect x="262" y="239" width="12" height="6" fill="#cfeec2"/><rect x="190" y="19" width="9" height="6" fill="#cfeec2"/><rect x="102" y="16" width="8" height="6" fill="#cfeec2"/><rect x="109" y="8" width="17" height="5" rx="2" fill="#a9d69a"/><rect x="76" y="104" width="8" height="10" fill="#cfeec2"/><rect x="298" y="140" width="6" height="5" fill="#efefcf"/><rect x="300" y="141" width="3.5" height="4" fill="#6d8a78"/><rect x="103" y="79" width="10" height="4" rx="2" fill="#a9d69a"/><rect x="285" y="158" width="14" height="5" fill="#cfeec2"/><rect x="158" y="294" width="18" height="5" rx="2" fill="#a9d69a"/><rect x="110" y="50" width="4" height="5" fill="#6d8a78" opacity=".8"/><rect x="160" y="234" width="9" height="10" fill="#cfeec2"/><rect x="295" y="256" width="19" height="8" rx="2" fill="#a9d69a"/><rect x="68" y="155" width="6" height="5" fill="#cfeec2"/><rect x="84" y="78" width="4" height="5" fill="#6d8a78" opacity=".8"/><rect x="287" y="134" width="22" height="9" rx="2" fill="#a9d69a"/><rect x="109" y="66" width="9" height="6" fill="#cfeec2"/><rect x="187" y="270" width="15" height="7" rx="2" fill="#a9d69a"/><rect x="240" y="25" width="4" height="5" fill="#6d8a78" opacity=".8"/><rect x="273" y="235" width="4" height="5" fill="#6d8a78" opacity=".8"/><rect x="143" y="54" width="4" height="5" fill="#6d8a78" opacity=".8"/><rect x="100" y="240" width="14" height="6" rx="2" fill="#a9d69a"/><rect x="284" y="217" width="8" height="6" fill="#cfeec2"/><rect x="271" y="242" width="18" height="11" fill="#cfeec2"/><rect x="197" y="105" width="6" height="5" fill="#efefcf"/><rect x="199" y="106" width="3.5" height="4" fill="#6d8a78"/><rect x="291" y="195" width="9" height="6" fill="#efefcf"/><rect x="293" y="196" width="3.5" height="4" fill="#6d8a78"/><rect x="262" y="248" width="10" height="7" fill="#cfeec2"/><rect x="72" y="176" width="12" height="6" fill="#cfeec2"/><rect x="273" y="106" width="8" height="8" fill="#efefcf"/><rect x="275" y="107" width="3.5" height="4" fill="#6d8a78"/><rect x="126" y="275" width="8" height="7" fill="#efefcf"/><rect x="128" y="276" width="3.5" height="4" fill="#6d8a78"/><rect x="6" y="132" width="6" height="10" fill="#cfeec2"/><rect x="52" y="142" width="4" height="5" fill="#6d8a78" opacity=".8"/><rect x="167" y="98" width="8" height="7" fill="#efefcf"/><rect x="169" y="99" width="3.5" height="4" fill="#6d8a78"/><rect x="32" y="168" width="10" height="10" fill="#cfeec2"/><rect x="152" y="169" width="4" height="5" fill="#6d8a78" opacity=".8"/><rect x="274" y="133" width="8" height="7" fill="#efefcf"/><rect x="276" y="134" width="3.5" height="4" fill="#6d8a78"/><rect x="208" y="136" width="7" height="8" fill="#efefcf"/><rect x="210" y="137" width="3.5" height="4" fill="#6d8a78"/><rect x="210" y="263" width="12" height="7" rx="2" fill="#a9d69a"/><rect x="283" y="252" width="8" height="8" fill="#cfeec2"/><rect x="22" y="72" width="15" height="10" fill="#cfeec2"/><rect x="269" y="46" width="4" height="5" fill="#6d8a78" opacity=".8"/><rect x="198" y="43" width="22" height="5" rx="2" fill="#a9d69a"/><rect x="286" y="119" width="9" height="7" fill="#efefcf"/><rect x="288" y="120" width="3.5" height="4" fill="#6d8a78"/><rect x="48" y="129" width="7" height="6" fill="#efefcf"/><rect x="50" y="130" width="3.5" height="4" fill="#6d8a78"/><rect x="96" y="217" width="14" height="8" fill="#cfeec2"/></pattern>
<pattern id="streets" width="9" height="7" patternUnits="userSpaceOnUse" patternTransform="rotate(-16.5)"><path d="M0 .5H9M.5 0V7" stroke="#f4f4f4" stroke-width="1"/></pattern>
<filter id="soft" x="0" y="0" width="100%" height="100%"><feGaussianBlur stdDeviation=".9"/></filter><filter id="soft2" x="0" y="0" width="100%" height="100%"><feGaussianBlur stdDeviation=".55"/></filter></defs>
<path d="M330.0 470.0 C413.3 416.7 575.0 365.0 700.0 380.0 C825.0 395.0 1030.0 506.7 1080.0 560.0 C1130.0 613.3 1041.7 646.7 1000.0 700.0 C958.3 753.3 893.3 836.7 830.0 880.0 C766.7 923.3 695.0 943.3 620.0 960.0 C545.0 976.7 441.7 990.0 380.0 980.0 C318.3 970.0 280.0 946.7 250.0 900.0 C220.0 853.3 186.7 771.7 200.0 700.0 C213.3 628.3 246.7 523.3 330.0 470.0Z" fill="url(#streets)" opacity="0.275"/>
<path d="M440.0 760.0 C485.0 723.3 653.3 696.7 700.0 720.0 C746.7 743.3 743.3 860.0 720.0 900.0 C696.7 940.0 608.3 953.3 560.0 960.0 C511.7 966.7 450.0 973.3 430.0 940.0 C410.0 906.7 395.0 796.7 440.0 760.0Z" fill="url(#streets)" opacity="0.275"/>
<path d="M342.0 356.9 C356.5 334.9 438.7 313.4 463.8 327.9 C488.9 342.4 507.3 421.8 492.8 443.8 C478.3 465.8 401.9 474.6 376.8 460.1 C351.7 445.6 327.5 378.9 342.0 356.9Z" fill="url(#streets)" opacity="0.24750000000000003"/>
<path d="M760.3 183.0 C789.3 156.4 881.0 120.2 916.8 139.5 C952.5 158.8 989.3 257.8 974.8 298.9 C960.3 340.0 868.5 385.9 829.9 385.9 C791.2 385.9 754.5 332.7 742.9 298.9 C731.3 265.1 731.3 209.6 760.3 183.0Z" fill="url(#streets)" opacity="0.1925"/>
<path d="M0.0 800.0 C31.8 746.9 143.3 778.8 191.1 800.0 C238.9 821.2 292.0 879.6 286.7 927.4 C281.4 975.2 207.1 1054.8 159.3 1086.7 C111.5 1118.6 26.6 1166.4 0.0 1118.6 C-26.6 1070.8 -31.8 853.1 0.0 800.0Z" fill="url(#streets)" opacity="0.22000000000000003"/>
<rect x="0" y="96" width="1100" height="1160" fill="url(#specks)" opacity=".9"/>
<rect x="1094" y="96" width="906" height="30" fill="url(#specks)" opacity=".9"/>
<g id="roads">
<path d="M-186.0 96.0 L-122.0 522.8 L90.6 1256.0 M-110.8 96.0 L-50.1 500.5 L169.0 1256.0 M-35.6 96.0 L21.7 478.3 L247.3 1256.0 M39.6 96.0 L93.6 456.0 L325.6 1256.0 M114.8 96.0 L165.5 433.7 L403.9 1256.0 M190.0 96.0 L237.3 411.4 L482.2 1256.0 M265.2 96.0 L309.2 389.2 L560.6 1256.0 M340.4 96.0 L381.0 366.9 L638.9 1256.0 M415.6 96.0 L452.9 344.6 L717.2 1256.0 M566.0 96.0 L596.6 300.1 L873.8 1256.0 M641.2 96.0 L668.5 277.8 L952.2 1256.0 M716.4 96.0 L740.3 255.5 L1030.5 1256.0 M791.6 96.0 L812.2 233.2 L1108.8 1256.0 M866.8 96.0 L884.0 210.9 L1187.1 1256.0 M942.0 96.0 L955.9 188.7 L1265.4 1256.0 M1017.2 96.0 L1027.8 166.4 L1343.7 1256.0 M1092.4 96.0 L1099.6 144.1 L1422.1 1256.0 M1167.6 96.0 L1171.5 121.8 L1500.4 1256.0 M0.0 134.0 L1100.0 -183.9 M0.0 208.0 L1100.0 -109.9 M0.0 283.0 L1100.0 -34.9 M0.0 359.0 L1100.0 41.1 M0.0 441.0 L1100.0 123.1 M0.0 522.0 L1100.0 204.1 M0.0 600.0 L1100.0 282.1 M0.0 678.0 L1100.0 360.1 M0.0 750.0 L1100.0 432.1 M0.0 816.0 L1100.0 498.1 M0.0 885.0 L1100.0 567.1 M0.0 955.0 L1100.0 637.1 M0.0 1025.0 L1100.0 707.1 M0.0 1095.0 L1100.0 777.1 M0.0 1165.0 L1100.0 847.1 M0.0 1235.0 L1100.0 917.1 M0.0 1305.0 L1100.0 987.1" fill="none" stroke="#f4c993" stroke-width="2" stroke-dasharray="8 6" opacity=".42"/>
<path d="M-223.6 96.0 L-157.9 534.0 L51.5 1256.0 M-148.4 96.0 L-86.0 511.7 L129.8 1256.0 M-73.2 96.0 L-14.2 489.4 L208.1 1256.0 M2.0 96.0 L57.7 467.1 L286.4 1256.0 M77.2 96.0 L129.5 444.8 L364.8 1256.0 M152.4 96.0 L201.4 422.6 L443.1 1256.0 M227.6 96.0 L273.2 400.3 L521.4 1256.0 M302.8 96.0 L345.1 378.0 L599.7 1256.0 M378.0 96.0 L417.0 355.7 L678.0 1256.0 M528.4 96.0 L560.7 311.2 L834.7 1256.0 M603.6 96.0 L632.5 288.9 L913.0 1256.0 M678.8 96.0 L704.4 266.6 L991.3 1256.0 M754.0 96.0 L776.3 244.4 L1069.6 1256.0 M829.2 96.0 L848.1 222.1 L1147.9 1256.0 M904.4 96.0 L920.0 199.8 L1226.3 1256.0 M979.6 96.0 L991.8 177.5 L1304.6 1256.0 M1054.8 96.0 L1063.7 155.3 L1382.9 1256.0 M1130.0 96.0 L1135.5 133.0 L1461.2 1256.0 M566.0 96.0 L596.6 300.1 L873.8 1256.0 M641.2 96.0 L668.5 277.8 L952.2 1256.0 M716.4 96.0 L740.3 255.5 L1030.5 1256.0 M791.6 96.0 L812.2 233.2 L1108.8 1256.0 M866.8 96.0 L884.0 210.9 L1187.1 1256.0 M942.0 96.0 L955.9 188.7 L1265.4 1256.0 M1017.2 96.0 L1027.8 166.4 L1343.7 1256.0 M1092.4 96.0 L1099.6 144.1 L1422.1 1256.0 M1167.6 96.0 L1171.5 121.8 L1500.4 1256.0 M0.0 97.0 L1100.0 -220.9 M0.0 171.0 L1100.0 -146.9 M0.0 245.0 L1100.0 -72.9 M0.0 321.0 L1100.0 3.1 M0.0 397.0 L1100.0 79.1 M0.0 485.0 L1100.0 167.1 M0.0 560.0 L1100.0 242.1 M0.0 640.0 L1100.0 322.1 M0.0 717.0 L1100.0 399.1 M0.0 782.0 L1100.0 464.1 M0.0 850.0 L1100.0 532.1 M0.0 920.0 L1100.0 602.1 M0.0 990.0 L1100.0 672.1 M0.0 1060.0 L1100.0 742.1 M0.0 1130.0 L1100.0 812.1 M0.0 1200.0 L1100.0 882.1 M0.0 1270.0 L1100.0 952.1 M0.0 1340.0 L1100.0 1022.1 M0.0 1410.0 L1100.0 1092.1" fill="none" stroke="#f4c993" stroke-width="3.3" stroke-dasharray="46 3" opacity=".97"/>
</g>
<path d="M240.6 96.0 C244.0 102.8 256.1 122.1 260.9 136.6 C265.7 151.1 266.7 164.7 269.6 183.0 C272.5 201.3 274.4 227.4 278.3 246.7 C282.2 266.0 289.0 280.5 292.8 298.9 C296.6 317.3 299.5 342.4 301.4 356.9 C303.3 371.4 302.9 376.2 304.3 385.9 C305.8 395.5 308.2 402.4 310.1 414.8 C312.0 427.2 313.1 441.8 315.9 460.1 C318.7 478.4 322.5 497.8 326.8 524.7 C331.1 551.6 337.4 590.2 341.9 621.5 C346.4 652.8 350.5 689.6 354.0 712.3 C357.5 735.0 359.6 739.8 363.1 757.7 C366.6 775.7 373.1 807.6 375.2 820.0 C377.3 832.4 369.4 822.0 375.9 831.9 C382.4 841.8 402.4 863.7 414.1 879.6 C425.8 895.5 435.4 912.5 446.0 927.4 C456.6 942.3 469.4 958.2 477.9 968.8 C486.4 979.4 493.8 987.4 497.0 991.1" fill="none" stroke="#7c7c7c" stroke-width="2.6" stroke-linejoin="round" stroke-linecap="round" />
<path d="M0.0 460.1 C14.5 455.9 53.2 445.1 87.0 435.1 C120.8 425.1 167.2 410.4 202.9 400.3 C238.6 390.2 267.6 383.5 301.4 374.3 C335.2 365.1 373.9 355.9 405.8 345.3 C437.7 334.7 467.1 323.1 492.8 310.5 C518.5 297.9 546.3 279.6 560.0 269.9 C573.7 260.2 561.2 260.2 574.8 252.5 C588.4 244.8 615.8 233.2 641.4 223.5 C667.0 213.8 711.5 202.8 728.4 194.6 C745.3 186.4 733.2 181.1 742.9 174.3 C752.6 167.5 773.8 159.8 786.4 154.0 C799.0 148.2 801.4 146.3 818.3 139.5 C835.2 132.7 866.5 120.7 887.8 113.4 C909.0 106.2 936.1 98.9 945.8 96.0" fill="none" stroke="#7c7c7c" stroke-width="2.6" stroke-linejoin="round" stroke-linecap="round" />
<path d="M469.6 96.0 C471.1 105.7 472.0 138.1 478.3 154.0 C484.6 169.9 493.6 179.1 507.2 191.7 C520.8 204.2 549.2 219.2 560.0 229.3 C570.8 239.4 563.1 240.9 571.9 252.5 C580.6 264.1 601.9 281.5 612.5 298.9 C623.1 316.3 630.4 337.6 635.7 356.9 C641.0 376.2 641.9 397.6 644.3 414.8 C646.7 432.0 647.3 449.4 650.1 460.1 C652.9 470.9 655.1 470.1 661.0 479.3 C666.9 488.6 678.1 503.0 685.2 515.6 C692.3 528.2 697.4 541.4 703.4 555.0 C709.4 568.6 719.5 585.2 721.5 597.3 C723.5 609.4 721.0 616.0 715.5 627.6 C710.0 639.2 692.8 660.4 688.3 666.9" fill="none" stroke="#7c7c7c" stroke-width="2.6" stroke-linejoin="round" stroke-linecap="round" />
<path d="M798.0 96.0 C798.5 107.1 795.6 143.4 800.9 162.7 C806.2 182.0 820.7 193.1 829.9 211.9 C839.1 230.7 848.7 256.4 855.9 275.7 C863.1 295.0 867.0 307.1 873.3 327.9 C879.6 348.7 888.3 378.3 893.6 400.3 C898.9 422.3 899.6 440.9 905.2 460.1 C910.8 479.3 920.1 494.8 927.3 515.6 C934.5 536.5 942.5 568.6 948.5 585.2 C954.5 601.9 958.1 606.9 963.6 615.5 C969.1 624.1 978.8 633.2 981.8 636.7" fill="none" stroke="#7c7c7c" stroke-width="2.6" stroke-linejoin="round" stroke-linecap="round" />
<path d="M1100.0 232.2 C1086.9 232.2 1037.2 224.9 1021.2 232.2 C1005.2 239.4 1012.5 258.3 1003.8 275.7 C995.1 293.1 987.4 315.8 969.0 336.6 C950.6 357.4 906.2 389.7 893.6 400.3" fill="none" stroke="#7c7c7c" stroke-width="2.6" stroke-linejoin="round" stroke-linecap="round" />
<path d="M1100.0 281.5 C1092.7 284.4 1071.9 291.2 1055.9 298.9 C1039.9 306.6 1019.7 319.2 1003.8 327.9 C987.9 336.6 967.5 347.2 960.3 351.1" fill="none" stroke="#7c7c7c" stroke-width="2.6" stroke-linejoin="round" stroke-linecap="round" />
<path d="M1100.1 524.7 C1092.5 529.8 1069.1 542.9 1054.4 555.0 C1039.7 567.1 1024.1 582.2 1012.0 597.3 C999.9 612.4 989.9 630.6 981.8 645.7 C973.7 660.8 971.7 674.0 963.6 688.1 C955.5 702.2 942.4 718.9 933.3 730.5 C924.2 742.1 924.2 749.1 909.1 757.7 C894.0 766.3 863.8 774.3 842.6 781.9 C821.4 789.5 794.7 796.8 782.1 803.1 C769.5 809.5 765.5 817.8 766.9 820.0 C768.3 822.2 798.1 814.4 790.3 816.1 C782.5 817.8 733.1 820.2 720.3 830.1 C707.5 840.0 719.1 859.2 713.3 875.6 C707.4 892.0 689.9 919.4 685.2 928.2" fill="none" stroke="#7c7c7c" stroke-width="2.6" stroke-linejoin="round" stroke-linecap="round" />
<path d="M933.3 600.4 C918.2 604.4 866.3 621.1 842.6 624.6 C818.9 628.1 802.2 620.0 791.1 621.5 C780.0 623.0 789.6 630.6 776.0 633.6 C762.4 636.6 724.0 634.2 709.4 639.7 C694.8 645.2 701.4 649.8 688.3 666.9 C675.2 684.0 650.5 719.9 630.8 742.6 C611.1 765.3 585.4 790.2 570.3 803.1 C555.2 816.0 555.4 816.3 540.0 820.0 C524.6 823.7 498.9 819.3 477.9 825.5 C456.9 831.7 435.4 851.5 414.1 857.3 C392.9 863.1 379.1 858.9 350.4 860.5 C321.7 862.1 268.6 853.6 242.1 866.9 C215.6 880.2 206.5 920.0 191.1 940.2 C175.7 960.4 170.9 965.7 149.7 988.0 C128.5 1010.3 88.7 1049.6 63.7 1074.0 C38.8 1098.4 10.6 1124.4 0.0 1134.5" fill="none" stroke="#7c7c7c" stroke-width="2.6" stroke-linejoin="round" stroke-linecap="round" />
<path d="M152.9 988.0 C155.0 997.0 160.4 1020.3 165.7 1042.1 C171.0 1063.9 180.6 1100.5 184.8 1118.6 C189.0 1136.6 192.2 1136.8 191.1 1150.4 C190.0 1164.0 180.5 1191.8 178.4 1200.1" fill="none" stroke="#7c7c7c" stroke-width="2.6" stroke-linejoin="round" stroke-linecap="round" />
<path d="M0.0 479.3 C10.1 477.3 40.3 463.7 60.5 467.2 C80.7 470.7 105.9 489.9 121.0 500.5 C136.1 511.1 143.2 515.7 151.3 530.8 C159.4 545.9 165.4 566.1 169.4 591.3 C173.4 616.5 168.4 662.9 175.5 682.1 C182.6 701.3 195.7 695.7 211.8 706.3 C227.9 716.9 252.1 732.0 272.3 745.6 C292.5 759.2 312.6 776.9 332.8 788.0 C353.0 799.1 355.4 802.2 393.3 812.2 C431.2 822.2 532.3 841.9 560.1 847.8" fill="none" stroke="#7c7c7c" stroke-width="2.6" stroke-linejoin="round" stroke-linecap="round" />
<path d="M440.0 854.6 C451.7 850.5 486.8 837.1 510.1 830.1 C533.5 823.1 554.4 820.7 580.1 812.5 C605.8 804.3 640.8 789.2 664.2 781.0 C687.6 772.8 710.9 766.4 720.3 763.5" fill="none" stroke="#7c7c7c" stroke-width="2.6" stroke-linejoin="round" stroke-linecap="round" />
<path d="M440.0 956.2 C451.7 958.5 486.8 969.0 510.1 970.2 C533.5 971.4 559.1 966.7 580.1 963.2 C601.1 959.7 618.7 955.0 636.2 949.2 C653.7 943.4 677.0 931.7 685.2 928.2" fill="none" stroke="#7c7c7c" stroke-width="2.6" stroke-linejoin="round" stroke-linecap="round" />
<path d="M540.0 191.7 C544.8 195.1 556.9 200.8 569.0 211.9 C581.1 223.0 601.4 240.9 612.5 258.3 C623.6 275.7 629.4 297.0 635.7 316.3 C642.0 335.6 646.7 357.9 650.1 374.3 C653.5 390.7 654.9 408.1 655.9 414.8" fill="none" stroke="#7c7c7c" stroke-width="2.6" stroke-linejoin="round" stroke-linecap="round" />
<path d="M0.0 403.2 C9.7 399.8 36.8 390.2 58.0 383.0 C79.2 375.8 103.3 367.5 127.5 359.8 C151.7 352.1 180.7 342.9 202.9 336.6 C225.1 330.3 243.5 326.5 260.9 322.1 C278.3 317.8 298.0 319.2 307.2 310.5 C316.4 301.8 313.5 281.5 315.9 269.9 C318.3 258.3 314.0 249.6 321.7 240.9 C329.4 232.2 348.3 224.5 362.3 217.7 C376.3 210.9 388.9 206.6 405.8 200.3 C422.7 194.0 438.1 186.8 463.8 180.1 C489.5 173.3 537.6 165.6 560.0 159.8 C582.4 154.0 582.0 151.1 598.0 145.3 C614.0 139.5 635.6 131.3 655.9 125.0 C676.2 118.7 702.3 112.4 719.7 107.6 C737.1 102.8 753.5 97.9 760.3 96.0" fill="none" stroke="#e59ea3" stroke-width="5" stroke-linejoin="round" stroke-linecap="round" />
<path d="M457.0 96.0 C457.7 102.3 458.8 120.5 461.0 134.0 C463.2 147.5 466.7 159.2 470.0 177.0 C473.3 194.8 477.2 217.8 481.0 241.0 C484.8 264.2 488.2 279.5 493.0 316.0 C497.8 352.5 505.0 433.3 510.0 460.0 C515.0 486.7 518.0 451.2 523.0 476.0 C528.0 500.8 534.2 569.7 540.0 609.0 C545.8 648.3 552.5 681.7 558.0 712.0 C563.5 742.3 568.5 764.7 573.0 791.0 C577.5 817.3 580.5 843.5 585.0 870.0 C589.5 896.5 597.5 936.7 600.0 950.0" fill="none" stroke="#e59ea3" stroke-width="4" stroke-linejoin="round" stroke-linecap="round" stroke-dasharray="14 5"/>
<path d="M986.4 183.0 C988.3 190.7 994.1 212.9 998.0 229.3 C1001.9 245.7 1004.8 257.3 1009.6 281.5 C1014.4 305.7 1022.2 352.1 1027.0 374.3 C1031.8 396.5 1034.8 400.5 1038.6 414.8 C1042.4 429.1 1042.4 449.4 1050.1 460.1 C1057.8 470.9 1076.3 466.0 1084.6 479.3 C1092.9 492.6 1097.5 529.7 1100.1 539.8" fill="none" stroke="#e59ea3" stroke-width="4.5" stroke-linejoin="round" stroke-linecap="round" stroke-dasharray="16 4"/>
<path d="M1093.3 578.2 C1085.8 585.2 1063.1 604.9 1048.0 620.5 C1032.9 636.1 1015.2 654.9 1002.6 672.0 C990.0 689.1 979.9 711.8 972.3 723.4 C964.7 735.0 963.2 738.0 957.2 741.5 C951.2 745.0 948.6 741.6 936.0 744.6 C923.4 747.6 900.7 753.2 881.5 759.7 C862.3 766.2 841.2 777.4 821.0 783.9 C800.8 790.4 770.6 796.5 760.5 799.0" fill="none" stroke="#e59ea3" stroke-width="5" stroke-linejoin="round" stroke-linecap="round" />
<path d="M957.2 741.5 C957.2 743.5 964.8 744.0 957.2 753.6 C949.6 763.2 924.4 790.4 911.8 799.0 C899.2 807.6 893.1 802.1 881.5 805.1 C869.9 808.1 851.8 814.2 842.2 817.2 C832.6 820.2 827.1 822.2 824.1 823.2" fill="none" stroke="#e59ea3" stroke-width="4.5" stroke-linejoin="round" stroke-linecap="round" />
<path d="M790.3 889.6 C781.5 891.9 751.8 898.4 737.8 903.6 C723.8 908.9 715.0 915.8 706.2 921.1 C697.4 926.4 688.7 932.9 685.2 935.2" fill="none" stroke="#e59ea3" stroke-width="5" stroke-linejoin="round" stroke-linecap="round" />
<path d="M266.3 700.2 C270.3 705.2 283.9 719.4 290.5 730.5 C297.1 741.6 303.1 760.8 305.6 766.8" fill="none" stroke="#e59ea3" stroke-width="5" stroke-linejoin="round" stroke-linecap="round" />
<path d="M560.1 874.9 C546.4 877.8 510.2 886.3 477.9 892.4 C445.6 898.5 395.6 904.6 366.4 911.5 C337.2 918.4 323.3 929.0 302.6 933.8 C281.9 938.6 262.8 934.9 242.1 940.2 C221.4 945.5 205.5 951.9 178.4 965.7 C151.3 979.5 109.3 1008.1 79.6 1023.0 C49.9 1037.9 13.3 1049.6 0.0 1054.9" fill="none" stroke="#e59ea3" stroke-width="4" stroke-linejoin="round" stroke-linecap="round" stroke-dasharray="14 5"/>
<path d="M541.6 1003.9 C528.3 1003.9 481.5 1006.5 461.9 1003.9 C442.2 1001.2 435.9 992.0 423.7 988.0 C411.5 984.0 399.8 980.5 388.7 980.0 C377.6 979.5 366.9 980.3 356.8 984.8 C346.7 989.3 345.1 999.7 328.1 1007.1 C311.1 1014.5 288.4 1019.3 254.9 1029.4 C221.4 1039.5 159.3 1058.0 127.4 1067.6 C95.5 1077.1 74.3 1083.5 63.7 1086.7" fill="none" stroke="#e59ea3" stroke-width="4" stroke-linejoin="round" stroke-linecap="round" stroke-dasharray="18 5"/>
<path d="M0.0 1112.2 C8.0 1103.7 34.5 1076.6 47.8 1061.2 C61.1 1045.8 74.3 1026.7 79.6 1019.8" fill="none" stroke="#e59ea3" stroke-width="5" stroke-linejoin="round" stroke-linecap="round" />
<path d="M0.0 706.3 C1.5 712.3 6.1 731.5 9.1 742.6 C12.1 753.7 16.7 767.8 18.2 772.8" fill="none" stroke="#e59ea3" stroke-width="4.5" stroke-linejoin="round" stroke-linecap="round" />
<path d="M699.2 833.6 C714.4 829.5 763.4 816.0 790.3 809.0 C817.2 802.0 840.0 796.8 860.4 791.5 C880.8 786.2 904.1 779.8 912.9 777.5" fill="none" stroke="#e59ea3" stroke-width="4" stroke-linejoin="round" stroke-linecap="round" stroke-dasharray="14 5"/>
<path d="M440.0 893.1 C454.6 889.0 505.4 874.4 527.6 868.6 C549.8 862.8 565.5 859.9 573.1 858.1" fill="none" stroke="#e59ea3" stroke-width="4" stroke-linejoin="round" stroke-linecap="round" stroke-dasharray="14 5"/>
<path d="M357.0 509.6 L372.2 539.8" fill="none" stroke="#e59ea3" stroke-width="6" stroke-linejoin="round" stroke-linecap="round" />
<path d="M540.0 609.4 C541.5 616.5 546.1 634.6 549.1 651.8 C552.1 668.9 556.7 702.2 558.2 712.3" fill="none" stroke="#e59ea3" stroke-width="4" stroke-linejoin="round" stroke-linecap="round" stroke-dasharray="14 5"/>
<path d="M114.5 96.0 C115.7 103.7 119.5 122.1 121.7 142.4 C123.9 162.7 125.8 194.5 127.5 217.7 C129.2 240.9 130.2 263.1 131.9 281.5 C133.6 299.9 135.0 312.4 137.7 327.9 C140.3 343.4 144.7 359.8 147.8 374.3 C150.9 388.8 153.6 400.5 156.5 414.8 C159.4 429.1 162.3 445.8 165.2 460.1 C168.1 474.4 171.3 483.7 174.0 500.5 C176.7 517.3 178.2 540.8 181.5 561.0 C184.8 581.2 189.6 605.4 193.6 621.5 C197.6 637.6 199.6 648.8 205.7 657.9 C211.8 667.0 219.9 669.0 230.0 676.0 C240.1 683.0 260.2 696.2 266.3 700.2" fill="none" stroke="#8d9fc0" stroke-width="9" stroke-linejoin="round" stroke-linecap="round" />
<path d="M0.0 420.6 C7.2 419.2 27.5 415.3 43.5 411.9 C59.5 408.5 77.8 404.6 95.7 400.3 C113.6 396.0 132.8 390.2 150.7 385.9 C168.6 381.6 185.5 378.6 202.9 374.3 C220.3 370.0 240.6 365.1 255.1 359.8 C269.6 354.5 280.7 349.6 289.9 342.4 C299.1 335.1 305.3 326.4 310.1 316.3 C314.9 306.2 316.4 292.1 318.8 281.5 C321.2 270.9 320.7 260.2 324.6 252.5 C328.5 244.8 333.3 240.4 342.0 235.1 C350.7 229.8 363.8 225.9 376.8 220.6 C389.9 215.3 405.8 209.0 420.3 203.2 C434.8 197.4 449.3 191.2 463.8 185.9 C478.3 180.6 491.2 173.3 507.2 171.4 C523.2 169.5 547.3 172.9 560.0 174.3 C572.7 175.8 572.3 179.6 583.5 180.1 C594.7 180.6 615.9 179.1 627.0 177.2 C638.1 175.3 640.5 172.4 650.1 168.5 C659.8 164.6 669.4 157.9 684.9 154.0 C700.4 150.1 726.0 149.2 742.9 145.3 C759.8 141.4 771.9 135.6 786.4 130.8 C800.9 126.0 817.8 120.2 829.9 116.3 C842.0 112.4 842.4 110.0 858.8 107.6 C875.2 105.2 909.1 104.7 928.4 101.8 C947.7 98.9 967.1 92.1 974.8 90.2" fill="none" stroke="#8d9fc0" stroke-width="7.5" stroke-linejoin="round" stroke-linecap="round" />
<path d="M-12.1 742.6 C-5.0 740.1 11.7 734.0 30.3 727.4 C49.0 720.8 79.6 711.3 99.8 703.2 C120.0 695.1 134.7 685.5 151.3 679.0 C168.0 672.5 184.6 668.4 199.7 663.9 C214.8 659.4 227.5 654.8 242.1 651.8 C256.7 648.8 272.3 648.7 287.4 645.7 C302.5 642.7 317.7 638.1 332.8 633.6 C347.9 629.1 366.1 624.0 378.2 618.5 C390.3 613.0 393.8 606.4 405.4 600.4 C417.0 594.4 434.7 588.8 447.8 582.2 C460.9 575.6 470.5 569.6 484.1 561.0 C497.7 552.4 516.8 540.9 529.5 530.8 C542.2 520.7 550.8 510.1 560.1 500.5 C569.4 490.9 572.1 479.9 585.4 473.3 C598.7 466.8 619.1 463.7 639.8 461.2 C660.5 458.7 692.8 459.2 709.4 458.2 C726.0 457.2 724.6 455.9 739.7 455.1 C754.8 454.3 783.1 454.1 800.2 453.6 C817.4 453.1 830.5 454.4 842.6 452.1 C854.7 449.8 865.3 445.2 872.8 440.0 C880.3 434.8 874.7 425.3 887.8 420.6 C900.9 415.9 933.2 416.2 951.6 411.9 C970.0 407.6 984.5 399.9 998.0 394.6 C1011.5 389.3 1022.2 384.9 1032.8 380.1 C1043.4 375.3 1050.5 370.4 1061.7 365.6 C1072.9 360.8 1093.6 353.5 1100.0 351.1" fill="none" stroke="#8d9fc0" stroke-width="8.5" stroke-linejoin="round" stroke-linecap="round" />
<path d="M641.4 96.0 C641.4 102.3 639.9 121.6 641.4 133.7 C642.9 145.8 647.7 155.5 650.1 168.5 C652.5 181.5 653.0 197.9 655.9 211.9 C658.8 225.9 661.7 241.9 667.5 252.5 C673.3 263.1 683.9 267.0 690.7 275.7 C697.5 284.4 703.8 294.1 708.1 304.7 C712.5 315.3 714.4 327.9 716.8 339.5 C719.2 351.1 720.7 361.8 722.6 374.3 C724.5 386.9 726.0 404.2 728.4 414.8 C730.8 425.4 735.2 429.8 737.1 438.0 C739.0 446.2 738.8 453.8 739.7 464.2 C740.6 474.6 740.7 485.4 742.7 500.5 C744.7 515.6 748.8 538.9 751.8 555.0 C754.8 571.1 758.9 583.2 760.9 597.3 C762.9 611.4 762.4 626.1 763.9 639.7 C765.4 653.3 772.0 667.9 770.0 679.0 C768.0 690.1 761.9 697.7 751.8 706.3 C741.7 714.9 721.0 724.5 709.4 730.5 C697.8 736.5 689.2 735.6 682.2 742.6 C675.2 749.6 670.6 762.7 667.1 772.8 C663.6 782.9 661.5 801.7 661.0 803.1 C660.5 804.5 663.1 776.5 664.2 781.0 C665.3 785.5 664.8 814.3 667.7 830.1 C670.6 845.9 676.5 862.2 681.7 875.6 C687.0 889.0 696.9 901.8 699.2 910.6 C701.5 919.4 696.3 925.3 695.7 928.2" fill="none" stroke="#8d9fc0" stroke-width="6" stroke-linejoin="round" stroke-linecap="round" />
<path d="M331.3 997.5 C329.2 1000.7 326.0 1010.8 318.6 1016.6 C311.2 1022.5 302.6 1026.8 286.7 1032.6 C270.8 1038.4 241.1 1046.4 223.0 1051.7 C204.9 1057.0 193.3 1060.7 178.4 1064.4 C163.5 1068.1 145.0 1071.3 133.8 1074.0 C122.7 1076.7 120.5 1075.0 111.5 1080.3 C102.5 1085.6 88.6 1096.2 79.6 1105.8 C70.6 1115.4 67.4 1125.0 57.3 1137.7 C47.2 1150.5 27.6 1171.9 19.1 1182.3 C10.6 1192.7 8.5 1197.1 6.4 1200.1" fill="none" stroke="#8d9fc0" stroke-width="8" stroke-linejoin="round" stroke-linecap="round" />
<path d="M111.5 1074.0 C110.2 1068.2 106.7 1050.6 103.5 1038.9 C100.3 1027.2 95.9 1014.0 92.4 1003.9 C89.0 993.8 86.0 989.0 82.8 978.4 C79.6 967.8 76.5 954.0 73.3 940.2 C70.1 926.4 67.4 911.0 63.7 895.6 C60.0 880.2 54.7 860.5 51.0 847.8 C47.3 835.0 44.6 827.1 41.4 819.1 C38.2 811.1 36.8 807.7 31.9 800.0 C27.0 792.3 17.4 782.4 12.1 772.8 C6.8 763.2 2.0 747.6 0.0 742.6" fill="none" stroke="#8d9fc0" stroke-width="8.5" stroke-linejoin="round" stroke-linecap="round" />
<path d="M399.4 555.0 C400.4 562.6 402.4 587.3 405.4 600.4 C408.4 613.5 413.4 622.0 417.5 633.6 C421.6 645.2 425.6 656.9 429.7 670.0 C433.8 683.1 438.8 702.2 441.8 712.3 C444.8 722.4 446.8 727.5 447.8 730.5" fill="none" stroke="#8d9fc0" stroke-width="6" stroke-linejoin="round" stroke-linecap="round" />
<path d="M199.7 663.9 C191.6 664.9 169.5 665.5 151.3 670.0 C133.2 674.5 111.0 682.5 90.8 691.1 C70.6 699.7 40.4 716.4 30.3 721.4" fill="none" stroke="#8d9fc0" stroke-width="4" stroke-linejoin="round" stroke-linecap="round" />
<path d="M529.5 530.8 L544.6 539.8" fill="none" stroke="#8d9fc0" stroke-width="4" stroke-linejoin="round" stroke-linecap="round" />
<path d="M695.7 928.2 C690.5 930.0 675.3 935.2 664.2 938.7 C653.1 942.2 641.5 945.7 629.2 949.2 C616.9 952.7 604.6 956.2 590.6 959.7 C576.6 963.2 561.5 967.0 545.1 970.2 C528.8 973.4 510.0 976.7 492.5 979.0 C475.0 981.3 437.1 981.7 440.0 984.2 C442.9 986.8 506.1 992.1 509.7 994.3 C513.4 996.5 476.2 999.6 461.9 997.5 C447.6 995.4 435.9 985.6 423.7 981.6 C411.5 977.6 399.8 974.1 388.7 973.6 C377.6 973.1 366.4 974.4 356.8 978.4 C347.2 982.4 335.6 994.3 331.3 997.5" fill="none" stroke="#8a8e98" stroke-width="5" stroke-linejoin="round" stroke-linecap="round" />
<circle cx="650" cy="168" r="11" fill="#8d9fc0"/>
<circle cx="737" cy="448" r="11" fill="#8d9fc0"/>
<circle cx="206" cy="660" r="10" fill="#8d9fc0"/>
<circle cx="405" cy="600" r="9" fill="#8d9fc0"/>
<circle cx="130" cy="390" r="9" fill="#8d9fc0"/>
<path d="M1120.0 570.0 C1115.5 580.5 1101.5 618.0 1093.0 633.0 C1084.5 648.0 1074.5 651.0 1069.0 660.0 C1063.5 669.0 1066.0 678.5 1060.0 687.0 C1054.0 695.5 1042.0 704.5 1033.0 711.0 C1024.0 717.5 1016.2 718.8 1006.0 726.0 C995.8 733.2 982.7 743.8 972.0 754.0 C961.3 764.2 950.5 776.5 942.0 787.0 C933.5 797.5 927.0 808.5 921.0 817.0 C915.0 825.5 912.5 832.5 906.0 838.0 C899.5 843.5 888.8 846.3 882.0 850.0 C875.2 853.7 872.0 853.3 865.0 860.0 C858.0 866.7 847.3 882.3 840.0 890.0 C832.7 897.7 827.2 902.3 821.0 906.0 C814.8 909.7 807.3 909.3 803.0 912.0 C798.7 914.7 797.8 919.0 795.0 922.0 C792.2 925.0 790.2 929.3 786.0 930.0 C781.8 930.7 774.3 926.0 770.0 926.0 C765.7 926.0 765.3 927.3 760.0 930.0 C754.7 932.7 747.0 937.7 738.0 942.0 C729.0 946.3 714.0 954.7 706.0 956.0 C698.0 957.3 696.3 949.7 690.0 950.0 C683.7 950.3 674.7 956.3 668.0 958.0 C661.3 959.7 657.7 958.2 650.0 960.0 C642.3 961.8 631.3 966.3 622.0 969.0 C612.7 971.7 605.0 973.2 594.0 976.0 C583.0 978.8 567.0 981.7 556.0 986.0 C545.0 990.3 536.8 998.7 528.0 1002.0 C519.2 1005.3 511.3 1005.7 503.0 1006.0 C494.7 1006.3 486.0 1005.3 478.0 1004.0 C470.0 1002.7 461.3 1000.2 455.0 998.0 C448.7 995.8 447.8 994.2 440.0 991.0 C432.2 987.8 418.7 980.5 408.0 979.0 C397.3 977.5 385.7 980.0 376.0 982.0 C366.3 984.0 357.5 988.3 350.0 991.0 C342.5 993.7 335.0 993.8 331.0 998.0 C327.0 1002.2 328.2 1008.7 326.0 1016.0 C323.8 1023.3 321.3 1035.3 318.0 1042.0 C314.7 1048.7 309.3 1048.7 306.0 1056.0 C302.7 1063.3 302.0 1076.0 298.0 1086.0 C294.0 1096.0 288.2 1107.3 282.0 1116.0 C275.8 1124.7 267.7 1132.0 261.0 1138.0 C254.3 1144.0 248.3 1145.7 242.0 1152.0 C235.7 1158.3 228.8 1169.0 223.0 1176.0 C217.2 1183.0 212.5 1180.7 207.0 1194.0 C201.5 1207.3 192.8 1245.7 190.0 1256.0 L2000 1256 L2000 140 L1894 118 Z" fill="#b9d0d3"/>
<path d="M706.2 924.7 C716.1 920.0 729.6 915.3 741.3 914.1 C753.0 912.9 767.5 917.6 776.3 917.6 C785.0 917.6 790.9 912.3 793.8 914.1 C796.7 915.9 797.9 924.7 793.8 928.2 C789.7 931.7 781.5 931.7 769.3 935.2 C757.0 938.7 734.3 945.7 720.3 949.2 C706.3 952.7 691.6 957.4 685.2 956.2 C678.8 955.0 678.2 947.5 681.7 942.2 C685.2 937.0 696.3 929.4 706.2 924.7Z" fill="#e3dadf" opacity="1"/>
<path d="M685.2 942.2 C691.1 941.0 708.6 938.1 720.3 935.2 C732.0 932.3 749.5 926.5 755.3 924.7" fill="none" stroke="#b9d0d3" stroke-width="3" stroke-linejoin="round" stroke-linecap="round" />
<path d="M706.2 924.7 C706.8 921.2 716.8 914.1 720.3 914.1 C723.8 914.1 727.9 921.2 727.3 924.7 C726.7 928.2 720.3 935.2 716.8 935.2 C713.3 935.2 705.6 928.2 706.2 924.7Z" fill="#cfc6a8" opacity="0.7"/>
<path d="M783.3 914.1 C785.3 911.8 795.0 911.8 797.3 914.1 C799.6 916.5 799.3 925.9 797.3 928.2 C795.3 930.6 787.4 930.6 785.1 928.2 C782.8 925.9 781.3 916.5 783.3 914.1Z" fill="#d6ceb4" opacity="0.8"/>
<path d="M771.1 922.9 C774.3 919.4 782.4 917.9 785.1 921.1 C787.8 924.3 787.9 934.0 787.5 942.2 C787.1 950.4 783.0 960.9 782.6 970.2 C782.2 979.5 786.2 988.9 785.1 998.2 C784.0 1007.5 777.3 1016.3 776.3 1026.2 C775.3 1036.1 780.1 1052.0 779.1 1057.8 C778.1 1063.6 772.5 1064.2 770.0 1061.3 C767.5 1058.4 767.6 1044.3 764.0 1040.3 C760.4 1036.3 752.1 1035.8 748.3 1037.5 C744.5 1039.2 746.0 1043.9 741.3 1050.8 C736.6 1057.7 724.8 1074.7 720.3 1078.8 C715.8 1082.9 715.3 1080.3 714.0 1075.3 C712.7 1070.3 709.8 1055.7 712.6 1049.0 C715.4 1042.3 728.1 1040.2 730.8 1035.0 C733.5 1029.8 724.9 1023.0 729.0 1017.5 C733.1 1012.0 748.9 1008.1 755.3 1001.7 C761.7 995.3 764.4 986.6 767.6 979.0 C770.8 971.4 774.9 962.3 774.6 956.2 C774.3 950.1 766.4 947.8 765.8 942.2 C765.2 936.7 767.9 926.4 771.1 922.9Z" fill="#9fd18d" stroke="#4c9a41" stroke-width="5" stroke-linejoin="round" opacity=".9"/>
<path d="M776.3 928.2 C776.6 935.2 779.3 958.5 778.1 970.2 C776.9 981.9 773.1 991.2 769.3 998.2 C765.5 1005.2 760.0 1007.5 755.3 1012.2 C750.6 1016.9 747.1 1016.9 741.3 1026.2 C735.5 1035.5 723.8 1061.3 720.3 1068.3" fill="none" stroke="#3f8f37" stroke-width="4" stroke-linejoin="round" stroke-linecap="round" opacity=".8"/>
<path d="M755.3 1012.2 C758.8 1013.4 773.4 1012.2 776.3 1019.2 C779.2 1026.2 773.4 1048.5 772.8 1054.3" fill="none" stroke="#3f8f37" stroke-width="3.5" stroke-linejoin="round" stroke-linecap="round" opacity=".8"/>
<path d="M757.0 973.7 C758.8 970.8 765.6 962.6 767.6 956.2 C769.6 949.8 769.0 938.7 769.3 935.2" fill="none" stroke="#eef3ee" stroke-width="5" stroke-linejoin="round" stroke-linecap="round" opacity=".8"/>
<path d="M541.6 1012.2 C542.2 1007.5 549.2 1002.9 555.6 1001.7 C562.0 1000.5 574.9 1001.1 580.1 1005.2 C585.4 1009.3 584.8 1018.6 587.1 1026.2 C589.4 1033.8 591.2 1042.6 594.1 1050.8 C597.0 1059.0 605.3 1070.3 604.7 1075.3 C604.1 1080.2 594.7 1082.2 590.6 1080.5 C586.5 1078.8 583.6 1071.5 580.1 1064.8 C576.6 1058.1 574.3 1046.1 569.6 1040.3 C564.9 1034.5 556.8 1034.4 552.1 1029.7 C547.4 1025.0 541.0 1016.9 541.6 1012.2Z" fill="#d6ecc8"/>
<path d="M545.1 1014.0 C545.1 1010.5 553.6 1006.1 559.1 1005.2 C564.6 1004.3 574.6 1006.4 578.4 1008.7 C582.2 1011.0 585.1 1016.3 581.9 1019.2 C578.7 1022.1 565.2 1027.1 559.1 1026.2 C553.0 1025.3 545.1 1017.5 545.1 1014.0Z" fill="#e6dfe6"/>
<path d="M594.1 1075.3 C598.8 1075.6 612.9 1079.3 622.2 1077.0 C631.6 1074.7 642.0 1068.6 650.2 1061.3 C658.4 1054.0 665.4 1042.6 671.2 1033.3 C677.0 1023.9 681.7 1010.5 685.2 1005.2 C688.7 999.9 691.0 1002.3 692.2 1001.7" fill="none" stroke="#d6ecc8" stroke-width="9" stroke-linecap="round" stroke-linejoin="round" opacity="1"/>
<path d="M587.1 1026.2 C588.9 1028.5 594.7 1035.0 597.6 1040.3 C600.5 1045.6 603.5 1054.9 604.7 1057.8" fill="none" stroke="#e8e4d8" stroke-width="8" stroke-linecap="round" stroke-linejoin="round" opacity="1"/>
<path d="M678.2 998.2 C680.0 995.3 692.2 993.0 695.7 994.7 C699.2 996.5 701.0 1005.8 699.2 1008.7 C697.5 1011.6 688.7 1014.0 685.2 1012.2 C681.7 1010.5 676.5 1001.1 678.2 998.2Z" fill="#d6ecc8" opacity="1"/>
<path d="M1094.0 96.0 C1100.8 92.3 1125.7 94.7 1135.0 96.0 C1144.3 97.3 1151.2 100.3 1150.0 104.0 C1148.8 107.7 1137.3 115.7 1128.0 118.0 C1118.7 120.3 1099.7 121.7 1094.0 118.0 C1088.3 114.3 1087.2 99.7 1094.0 96.0Z" fill="#9ccb8b" opacity="1"/>
<path d="M1100.0 116.0 C1108.3 113.3 1133.3 103.3 1150.0 100.0 C1166.7 96.7 1191.7 96.7 1200.0 96.0" fill="none" stroke="#9c5f8a" stroke-width="3" stroke-linecap="round" stroke-linejoin="round" opacity="0.7"/>
<path d="M1370.0 100.0 C1372.5 96.3 1393.0 94.3 1400.0 96.0 C1407.0 97.7 1414.5 106.3 1412.0 110.0 C1409.5 113.7 1392.0 119.7 1385.0 118.0 C1378.0 116.3 1367.5 103.7 1370.0 100.0Z" fill="#bcbcbc" opacity="1"/>
<path d="M1405.0 104.0 C1409.2 100.7 1427.5 97.3 1440.0 98.0 C1452.5 98.7 1478.3 104.7 1480.0 108.0 C1481.7 111.3 1460.8 116.3 1450.0 118.0 C1439.2 119.7 1422.5 120.3 1415.0 118.0 C1407.5 115.7 1400.8 107.3 1405.0 104.0Z" fill="#a6d394" opacity="1"/>
<path d="M1500.0 100.0 C1505.0 97.0 1532.0 96.0 1540.0 98.0 C1548.0 100.0 1553.0 109.0 1548.0 112.0 C1543.0 115.0 1518.0 118.0 1510.0 116.0 C1502.0 114.0 1495.0 103.0 1500.0 100.0Z" fill="#b5dda5" opacity="1"/>
<path d="M1590.0 104.0 C1596.7 101.0 1630.0 98.0 1640.0 100.0 C1650.0 102.0 1656.7 113.0 1650.0 116.0 C1643.3 119.0 1610.0 120.0 1600.0 118.0 C1590.0 116.0 1583.3 107.0 1590.0 104.0Z" fill="#a6d394" opacity="1"/>
<path d="M1180.0 112.0 C1190.0 110.0 1221.7 102.7 1240.0 100.0 C1258.3 97.3 1281.7 96.7 1290.0 96.0" fill="none" stroke="#f4c993" stroke-width="3" stroke-linecap="round" stroke-linejoin="round" opacity="1"/>
<path d="M1290.0 118.0 L1300.0 96.0" fill="none" stroke="#f4c993" stroke-width="3" stroke-linecap="round" stroke-linejoin="round" opacity="1"/>
<path d="M1480.0 118.0 C1493.3 115.7 1533.3 107.7 1560.0 104.0 C1586.7 100.3 1626.7 97.3 1640.0 96.0" fill="none" stroke="#e59ea3" stroke-width="4.5" stroke-linecap="round" stroke-linejoin="round" opacity="1"/>
<path d="M1640.0 118.0 C1650.0 116.0 1676.7 109.0 1700.0 106.0 C1723.3 103.0 1766.7 101.0 1780.0 100.0" fill="none" stroke="#8d9fc0" stroke-width="5" stroke-linecap="round" stroke-linejoin="round" opacity="1"/>
<path d="M1840.0 96.0 L1850.0 118.0" fill="none" stroke="#f4c993" stroke-width="3" stroke-linecap="round" stroke-linejoin="round" opacity="1"/>
<path d="M1780.0 118.0 L1900.0 100.0" fill="none" stroke="#f4c993" stroke-width="3" stroke-linecap="round" stroke-linejoin="round" opacity="1"/>
<path d="M1930.0 96.0 C1936.7 92.0 1988.3 90.3 2000.0 96.0 C2011.7 101.7 2006.7 126.0 2000.0 130.0 C1993.3 134.0 1971.7 125.7 1960.0 120.0 C1948.3 114.3 1923.3 100.0 1930.0 96.0Z" fill="#e0d6dc" opacity="1"/>
</g><g filter="url(#soft2)">
<g font-size="19.6" fill="#5c5af6" text-anchor="middle" font-family="Liberation Sans, sans-serif" stroke="#fff" stroke-opacity=".5" stroke-width="2" paint-order="stroke">
<text x="105" y="103">37</text>
<text x="117" y="132">35</text>
<text x="127" y="210">33</text>
<text x="133" y="278">32</text>
<text x="160" y="391">29</text>
<text x="160" y="411">29</text>
<text x="170" y="452">27</text>
<text x="165" y="470">26</text>
<text x="118" y="425">66</text>
<text x="207" y="395">66</text>
<text x="250" y="380">69</text>
<text x="292" y="362">69</text>
<text x="348" y="252">73</text>
<text x="323" y="300">73</text>
<text x="379" y="237">75</text>
<text x="420" y="222">75</text>
<text x="465" y="212">77</text>
<text x="495" y="188">77</text>
<text x="553" y="190">79</text>
<text x="597" y="196">83</text>
<text x="635" y="130">27</text>
<text x="802" y="148">88</text>
<text x="657" y="226">26</text>
<text x="674" y="279">22</text>
<text x="709" y="312">22</text>
<text x="714" y="347">20</text>
<text x="722" y="380">20</text>
<text x="724" y="412">18</text>
<text x="869" y="452">379</text>
<text x="610" y="485">371</text>
<text x="546" y="513">369</text>
<text x="741" y="512">14</text>
<text x="751" y="582">12B</text>
<text x="751" y="600">12A</text>
<text x="754" y="628">11</text>
<text x="757" y="645">10</text>
<text x="762" y="664">10</text>
<text x="177" y="506">25</text>
<text x="188" y="546">25</text>
<text x="390" y="634">365</text>
<text x="300" y="663">362</text>
<text x="170" y="688">359</text>
<text x="222" y="676">359</text>
<text x="231" y="697">20</text>
<text x="257" y="706">20</text>
<text x="120" y="703">355</text>
<text x="107" y="720">56</text>
<text x="64" y="765">354</text>
<text x="32" y="843">351</text>
<text x="346" y="1011">145</text>
<text x="302" y="1044">146</text>
<text x="195" y="1074">141</text>
<text x="160" y="1087">139</text>
<text x="75" y="1146">136</text>
<text x="668" y="957">155</text>
<text x="663" y="815">3</text>
<text x="685" y="908">1</text>
<text x="498" y="568">36</text>
<text x="440" y="608">36</text>
<text x="488" y="590">367</text>
<text x="940" y="104">92</text>
<text x="1090" y="525">3</text>
<text x="1736" y="106">406</text>
</g>
<rect x="94.0" y="157.0" width="62" height="30" rx="15" fill="#8c9ebd" stroke="#8c9ebd" stroke-width="2"/>
<rect x="97.0" y="160.0" width="56" height="24" rx="12" fill="none" stroke="#f4f6fa" stroke-width="1.8"/>
<text x="125" y="179" font-size="19" font-weight="bold" fill="#f4f6fa" text-anchor="middle" font-family="Liberation Sans, sans-serif">400</text>
<rect x="97.0" y="225.0" width="62" height="30" rx="15" fill="#8c9ebd" stroke="#8c9ebd" stroke-width="2"/>
<rect x="100.0" y="228.0" width="56" height="24" rx="12" fill="none" stroke="#f4f6fa" stroke-width="1.8"/>
<text x="128" y="247" font-size="19" font-weight="bold" fill="#f4f6fa" text-anchor="middle" font-family="Liberation Sans, sans-serif">400</text>
<rect x="643.0" y="143.0" width="100" height="30" rx="15" fill="#8c9ebd" stroke="#8c9ebd" stroke-width="2"/>
<rect x="646.0" y="146.0" width="94" height="24" rx="12" fill="none" stroke="#f4f6fa" stroke-width="1.8"/>
<text x="693" y="165" font-size="19" font-weight="bold" fill="#f4f6fa" text-anchor="middle" font-family="Liberation Sans, sans-serif">407 ETR</text>
<rect x="830.0" y="88.0" width="100" height="30" rx="15" fill="#8c9ebd" stroke="#8c9ebd" stroke-width="2"/>
<rect x="833.0" y="91.0" width="94" height="24" rx="12" fill="none" stroke="#f4f6fa" stroke-width="1.8"/>
<text x="880" y="110" font-size="19" font-weight="bold" fill="#f4f6fa" text-anchor="middle" font-family="Liberation Sans, sans-serif">407 ETR</text>
<rect x="676.0" y="443.0" width="62" height="30" rx="15" fill="#8c9ebd" stroke="#8c9ebd" stroke-width="2"/>
<rect x="679.0" y="446.0" width="56" height="24" rx="12" fill="none" stroke="#f4f6fa" stroke-width="1.8"/>
<text x="707" y="465" font-size="19" font-weight="bold" fill="#f4f6fa" text-anchor="middle" font-family="Liberation Sans, sans-serif">401</text>
<rect x="770.0" y="438.0" width="62" height="30" rx="15" fill="#8c9ebd" stroke="#8c9ebd" stroke-width="2"/>
<rect x="773.0" y="441.0" width="56" height="24" rx="12" fill="none" stroke="#f4f6fa" stroke-width="1.8"/>
<text x="801" y="460" font-size="19" font-weight="bold" fill="#f4f6fa" text-anchor="middle" font-family="Liberation Sans, sans-serif">401</text>
<rect x="862.0" y="406.0" width="62" height="30" rx="15" fill="#8c9ebd" stroke="#8c9ebd" stroke-width="2"/>
<rect x="865.0" y="409.0" width="56" height="24" rx="12" fill="none" stroke="#f4f6fa" stroke-width="1.8"/>
<text x="893" y="428" font-size="19" font-weight="bold" fill="#f4f6fa" text-anchor="middle" font-family="Liberation Sans, sans-serif">401</text>
<rect x="969.0" y="380.0" width="62" height="30" rx="15" fill="#8c9ebd" stroke="#8c9ebd" stroke-width="2"/>
<rect x="972.0" y="383.0" width="56" height="24" rx="12" fill="none" stroke="#f4f6fa" stroke-width="1.8"/>
<text x="1000" y="402" font-size="19" font-weight="bold" fill="#f4f6fa" text-anchor="middle" font-family="Liberation Sans, sans-serif">401</text>
<rect x="75.0" y="1023.0" width="58" height="30" rx="15" fill="#8c9ebd" stroke="#8c9ebd" stroke-width="2"/>
<rect x="78.0" y="1026.0" width="52" height="24" rx="12" fill="none" stroke="#f4f6fa" stroke-width="1.8"/>
<text x="104" y="1045" font-size="19" font-weight="bold" fill="#f4f6fa" text-anchor="middle" font-family="Liberation Sans, sans-serif">427</text>
<rect x="-15.0" y="720.0" width="58" height="30" rx="15" fill="#8c9ebd" stroke="#8c9ebd" stroke-width="2"/>
<rect x="-12.0" y="723.0" width="52" height="24" rx="12" fill="none" stroke="#f4f6fa" stroke-width="1.8"/>
<text x="14" y="742" font-size="19" font-weight="bold" fill="#f4f6fa" text-anchor="middle" font-family="Liberation Sans, sans-serif">427</text>
<circle cx="457" cy="117" r="16" fill="#cf9297" stroke="#cf9297" stroke-width="1.5"/><circle cx="457" cy="117" r="12.5" fill="none" stroke="#f3e6e7" stroke-width="1.5"/>
<text x="457" y="123.5" font-size="18" font-weight="bold" fill="#f3e6e7" text-anchor="middle" font-family="Liberation Sans, sans-serif">1</text>
<circle cx="521" cy="161" r="16" fill="#cf9297" stroke="#cf9297" stroke-width="1.5"/><circle cx="521" cy="161" r="12.5" fill="none" stroke="#f3e6e7" stroke-width="1.5"/>
<text x="521" y="167.5" font-size="18" font-weight="bold" fill="#f3e6e7" text-anchor="middle" font-family="Liberation Sans, sans-serif">7</text>
<circle cx="589" cy="150" r="16" fill="#cf9297" stroke="#cf9297" stroke-width="1.5"/><circle cx="589" cy="150" r="12.5" fill="none" stroke="#f3e6e7" stroke-width="1.5"/>
<text x="589" y="156.5" font-size="18" font-weight="bold" fill="#f3e6e7" text-anchor="middle" font-family="Liberation Sans, sans-serif">7</text>
<circle cx="62" cy="377" r="16" fill="#cf9297" stroke="#cf9297" stroke-width="1.5"/><circle cx="62" cy="377" r="12.5" fill="none" stroke="#f3e6e7" stroke-width="1.5"/>
<text x="62" y="383.5" font-size="18" font-weight="bold" fill="#f3e6e7" text-anchor="middle" font-family="Liberation Sans, sans-serif">7</text>
<text x="122" y="359" font-size="28" fill="#222" text-anchor="start" font-family="Liberation Sans, sans-serif" stroke="#fff" stroke-opacity=".55" stroke-width="3" paint-order="stroke" font-style="italic" letter-spacing="1.5">Vaughan</text>
<text x="668" y="107" font-size="28" fill="#222" text-anchor="start" font-family="Liberation Sans, sans-serif" stroke="#fff" stroke-opacity=".55" stroke-width="3" paint-order="stroke" font-style="italic" letter-spacing="2.2">Markham</text>
<text x="552" y="925" font-size="26.5" fill="#222" text-anchor="start" font-family="Liberation Sans, sans-serif" stroke="#fff" stroke-opacity=".55" stroke-width="3" paint-order="stroke" font-style="italic" letter-spacing="1.2">Toronto</text>
<text transform="translate(862 238) rotate(-17)" font-size="24" fill="#a45aa8" font-style="italic" font-family="Liberation Sans, sans-serif" stroke="#fff" stroke-opacity=".5" stroke-width="2.5" paint-order="stroke">Toronto</text>
<text transform="translate(262 1148) rotate(-56)" font-size="23" fill="#a45aa8" font-style="italic" font-family="Liberation Sans, sans-serif" stroke="#fff" stroke-opacity=".5" stroke-width="2.5" paint-order="stroke">Toronto</text>
<path d="M821 231 L1091 142" stroke="#9c5f8a" stroke-width="3" stroke-dasharray="16 4 4 4" fill="none" opacity=".85"/>
<path d="M1091 142 L1120 132" stroke="#9c5f8a" stroke-width="3" stroke-dasharray="16 4 4 4" fill="none" opacity=".85"/>
<text x="318" y="559" font-size="23" fill="#9cc79a" text-anchor="middle" font-family="Liberation Sans, sans-serif" stroke="#fff" stroke-opacity=".55" stroke-width="3" paint-order="stroke" font-weight="bold">Parc</text>
<text x="318" y="584" font-size="23" fill="#9cc79a" text-anchor="middle" font-family="Liberation Sans, sans-serif" stroke="#fff" stroke-opacity=".55" stroke-width="3" paint-order="stroke" font-weight="bold">Downsview</text>
<text x="402" y="1020" font-size="21" fill="#5f93b5" text-anchor="start" font-family="Liberation Sans, sans-serif" stroke="#fff" stroke-opacity=".55" stroke-width="3" paint-order="stroke" font-style="italic">The Bubble</text>
<text x="282" y="1063" font-size="21" fill="#5f93b5" text-anchor="start" font-family="Liberation Sans, sans-serif" stroke="#fff" stroke-opacity=".55" stroke-width="3" paint-order="stroke" font-style="italic">Mimico</text>
<text x="284" y="1085" font-size="21" fill="#5f93b5" text-anchor="start" font-family="Liberation Sans, sans-serif" stroke="#fff" stroke-opacity=".55" stroke-width="3" paint-order="stroke" font-style="italic">Harbour</text>
<text x="692" y="975" font-size="17.2" fill="#555" text-anchor="middle" font-family="Liberation Sans, sans-serif" stroke="#fff" stroke-opacity=".55" stroke-width="3" paint-order="stroke" font-style="italic">Ookwemin</text>
<text x="690" y="994" font-size="17.2" fill="#555" text-anchor="middle" font-family="Liberation Sans, sans-serif" stroke="#fff" stroke-opacity=".55" stroke-width="3" paint-order="stroke" font-style="italic">Minising</text>
<text x="732" y="1032" font-size="21" fill="#5f93b5" text-anchor="middle" font-family="Liberation Sans, sans-serif" stroke="#fff" stroke-opacity=".55" stroke-width="3" paint-order="stroke" font-style="italic">Embayment</text>
<text x="731" y="1053" font-size="21" fill="#5f93b5" text-anchor="middle" font-family="Liberation Sans, sans-serif" stroke="#fff" stroke-opacity=".55" stroke-width="3" paint-order="stroke" font-style="italic">B</text>
<text x="510" y="1070" font-size="17.2" fill="#555" text-anchor="start" font-family="Liberation Sans, sans-serif" stroke="#fff" stroke-opacity=".55" stroke-width="3" paint-order="stroke" font-style="italic">Îles de Toronto</text>
<text x="751" y="887" font-size="21" fill="#5f93b5" text-anchor="start" font-family="Liberation Sans, sans-serif" stroke="#fff" stroke-opacity=".55" stroke-width="3" paint-order="stroke" font-style="italic">Ashbridges</text>
<text x="782" y="908" font-size="21" fill="#5f93b5" text-anchor="start" font-family="Liberation Sans, sans-serif" stroke="#fff" stroke-opacity=".55" stroke-width="3" paint-order="stroke" font-style="italic">Bay</text>
<text x="552" y="995" font-size="17.4" fill="#8494e6" text-anchor="start" font-family="Liberation Sans, sans-serif" stroke="#fff" stroke-opacity=".55" stroke-width="3" paint-order="stroke" font-weight="bold">Airport</text>
<text x="553" y="974" font-size="17.4" fill="#8494e6" text-anchor="start" font-family="Liberation Sans, sans-serif" stroke="#fff" stroke-opacity=".55" stroke-width="3" paint-order="stroke" font-weight="bold">Toronto</text>
<text x="556" y="953" font-size="17.4" fill="#8494e6" text-anchor="start" font-family="Liberation Sans, sans-serif" stroke="#fff" stroke-opacity=".55" stroke-width="3" paint-order="stroke" font-weight="bold">Bishop</text>
<text x="512" y="995" font-size="17.4" fill="#8494e6" text-anchor="start" font-family="Liberation Sans, sans-serif" stroke="#fff" stroke-opacity=".55" stroke-width="3" paint-order="stroke" font-weight="bold">City</text>
<text x="1872" y="107" font-size="21" fill="#5f93b5" text-anchor="start" font-family="Liberation Sans, sans-serif" stroke="#fff" stroke-opacity=".55" stroke-width="3" paint-order="stroke" font-style="italic">Whitby</text>
<text x="1868" y="129" font-size="21" fill="#5f93b5" text-anchor="start" font-family="Liberation Sans, sans-serif" stroke="#fff" stroke-opacity=".55" stroke-width="3" paint-order="stroke" font-style="italic">Harbour</text>
<text x="-8" y="200" font-size="22" fill="#5f9f5a" text-anchor="start" font-family="Liberation Sans, sans-serif" stroke="#fff" stroke-opacity=".55" stroke-width="3" paint-order="stroke" font-style="italic">ghi</text>
<text x="-4" y="222" font-size="22" fill="#5f9f5a" text-anchor="start" font-family="Liberation Sans, sans-serif" stroke="#fff" stroke-opacity=".55" stroke-width="3" paint-order="stroke" font-style="italic">re</text>
<text x="-6" y="244" font-size="22" fill="#5f9f5a" text-anchor="start" font-family="Liberation Sans, sans-serif" stroke="#fff" stroke-opacity=".55" stroke-width="3" paint-order="stroke" font-style="italic">rva</text>
<text x="1063" y="158" font-size="17" fill="#4f9f45" text-anchor="start" font-family="Liberation Sans, sans-serif" stroke="#fff" stroke-opacity=".55" stroke-width="3" paint-order="stroke" >RN</text>
<path d="M556 1015 l3 -1 l2 12 l12 5 l0 3 l-12 -2 l1 8 l4 2 l0 2 l-6 -1 l-6 3 l0 -2 l4 -3 l-2 -8 l-12 4 l0 -3 l11 -7 Z" fill="#8aa0e8" opacity=".9"/>
<path d="M600 975 l8 6 M612 990 l-4 20 M630 985 l16 6 M655 996 l12 8 M590 1002 l-10 8 M610 1018 l0 12" stroke="#6f6fe8" stroke-width="2" fill="none" opacity=".8"/>
</g><g>
<path d="M580.1 805.5 L597.6 793.3 L615.2 786.3 L629.2 782.8 L636.2 776.6 L648.4 773.1 L651.1 791.5 L646.7 802.0 L643.2 812.5 L639.7 814.3 L653.7 828.3 L657.2 837.1 L666.0 845.8 L674.7 858.1 L678.2 863.3 L674.7 872.1 L666.0 875.6 L650.2 879.1 L648.4 866.8 L643.2 858.1 L637.9 844.1 L632.7 838.8 L615.2 835.3 L594.1 833.6 L587.1 819.6Z" fill="rgba(60,60,200,.3)" stroke="#2b2b9c" stroke-width="6" stroke-linejoin="round" stroke-opacity=".78"/>
<path d="M599.4 791.5 L602.9 802.0 L608.2 809.0 L622.2 808.2 L632.7 810.8 L639.7 814.3" fill="none" stroke="#2b2b9c" stroke-width="6" stroke-linejoin="round" stroke-opacity=".78"/>
<path d="M637.9 844.1 L646.7 841.5 L657.2 845.8 L666.0 851.1" fill="none" stroke="#2b2b9c" stroke-width="6" stroke-linejoin="round" stroke-opacity=".78"/>
<path d="M643.2 855.5 L651.9 855.5 L655.4 865.1 L667.7 863.3 L674.7 859.8" fill="none" stroke="#2b2b9c" stroke-width="6" stroke-linejoin="round" stroke-opacity=".78"/>
<path d="M511.8 840.6 L534.6 830.1 L538.1 826.6 L543.3 825.7 L548.6 827.4 L552.1 833.6 L562.6 830.1 L569.6 829.2 L578.4 837.1 L580.1 842.3 L573.1 844.1 L567.9 837.1 L565.2 840.6 L566.1 851.1 L560.9 852.8 L553.9 854.6 L552.1 858.1 L545.1 859.8 L538.1 858.1 L524.1 865.1 L518.8 863.3 L517.1 856.3 L513.6 847.6Z" fill="rgba(60,60,200,.3)" stroke="#2b2b9c" stroke-width="6" stroke-linejoin="round" stroke-opacity=".78"/>
<path d="M536.7 827.4 L539.0 859.0" fill="none" stroke="#2b2b9c" stroke-width="6" stroke-linejoin="round" stroke-opacity=".78"/>
<path d="M544.7 826.6 L547.2 858.1" fill="none" stroke="#2b2b9c" stroke-width="6" stroke-linejoin="round" stroke-opacity=".78"/>
<path d="M553.5 833.6 L555.6 854.6" fill="none" stroke="#2b2b9c" stroke-width="6" stroke-linejoin="round" stroke-opacity=".78"/>
<path d="M535.5 865.1 L539.8 868.6 L545.1 880.9 L546.8 889.6 L543.3 893.1 L539.0 882.6 L536.3 873.9Z" fill="rgba(60,60,200,.3)" stroke="#2b2b9c" stroke-width="6" stroke-linejoin="round" stroke-opacity=".78"/>
<path d="M534.6 887.9 L538.1 886.1 L545.1 893.1 L550.4 896.6 L548.6 900.1 L538.1 900.1 L535.5 894.9Z" fill="rgba(60,60,200,.3)" stroke="#2b2b9c" stroke-width="6" stroke-linejoin="round" stroke-opacity=".78"/>
<path d="M534.6 903.6 L545.1 900.1 L552.1 905.4 L545.1 908.9 L553.9 914.1 L552.1 919.4 L543.3 917.6 L538.1 912.4 L534.6 908.9Z" fill="rgba(60,60,200,.3)" stroke="#2b2b9c" stroke-width="6" stroke-linejoin="round" stroke-opacity=".78"/>
<path d="M646.7 889.6 L651.1 888.7 L651.9 898.4 L646.7 901.9 L641.4 908.9 L637.9 907.1 L643.2 900.1Z" fill="rgba(60,60,200,.3)" stroke="#2b2b9c" stroke-width="6" stroke-linejoin="round" stroke-opacity=".78"/>
<path d="M552.1 935.2 L590.6 924.7 L594.1 929.9 L592.4 935.2 L562.6 942.2 L553.9 940.4Z" fill="rgba(60,60,200,.3)" stroke="#2b2b9c" stroke-width="6" stroke-linejoin="round" stroke-opacity=".78"/>
<path d="M618.7 926.4 L632.7 922.9 L657.2 916.8 L659.0 922.9 L639.7 928.2 L637.9 935.2 L623.9 938.7 L620.4 933.4Z" fill="rgba(60,60,200,.3)" stroke="#2b2b9c" stroke-width="6" stroke-linejoin="round" stroke-opacity=".78"/>
<path d="M569.6 949.2 L594.1 942.2 L597.6 945.7 L611.7 938.7 L622.2 943.9 L623.9 954.4 L613.4 957.9 L608.2 963.2 L592.4 968.4 L585.4 961.4 L594.1 956.2 L590.6 950.9 L573.1 954.4Z" fill="rgba(60,60,200,.3)" stroke="#2b2b9c" stroke-width="6" stroke-linejoin="round" stroke-opacity=".78"/>
<path d="M440.0 964.9 L455.8 961.4 L466.3 957.9 L475.0 959.7 L466.3 963.2 L457.5 970.2 L450.5 966.7Z" fill="rgba(60,60,200,.3)" stroke="#2b2b9c" stroke-width="6" stroke-linejoin="round" stroke-opacity=".78"/>
<path d="M702.7 866.8 L713.3 863.3 L720.3 864.2 L715.0 868.6 L713.3 873.9 L708.0 872.1Z" fill="rgba(60,60,200,.3)" stroke="#2b2b9c" stroke-width="6" stroke-linejoin="round" stroke-opacity=".78"/>
<path d="M487.3 812.5 L496.1 808.2 L500.4 812.5 L501.3 816.9 L492.5 814.3Z" fill="rgba(60,60,200,.3)" stroke="#2b2b9c" stroke-width="6" stroke-linejoin="round" stroke-opacity=".78"/>
<path d="M557.0 963.2 L560.9 962.3 L561.2 965.8 L557.7 966.3Z" fill="rgba(60,60,200,.3)" stroke="#2b2b9c" stroke-width="6" stroke-linejoin="round" stroke-opacity=".78"/>
<path d="M846.4 803.8 L863.9 800.3 L865.6 805.5 L853.4 809.0Z" fill="rgba(60,60,200,.3)" stroke="#2b2b9c" stroke-width="6" stroke-linejoin="round" stroke-opacity=".78"/>
<path d="M884.9 816.1 L890.2 814.3 L895.4 831.8 L891.9 835.3Z" fill="rgba(60,60,200,.3)" stroke="#2b2b9c" stroke-width="6" stroke-linejoin="round" stroke-opacity=".78"/>
<path d="M318.6 866.9 L366.4 863.7 L388.7 876.5 L366.4 873.3 L350.4 870.7Z" fill="rgba(60,60,200,.3)" stroke="#2b2b9c" stroke-width="6" stroke-linejoin="round" stroke-opacity=".78"/>
<path d="M254.9 905.1 L280.3 892.4 L296.3 895.6 L274.0 908.3 L286.7 914.7 L288.3 924.2 L261.2 921.1Z" fill="rgba(60,60,200,.3)" stroke="#2b2b9c" stroke-width="6" stroke-linejoin="round" stroke-opacity=".78"/>
<path d="M178.5 706.3 L196.7 712.3 L190.6 716.9Z" fill="rgba(60,60,200,.3)" stroke="#2b2b9c" stroke-width="6" stroke-linejoin="round" stroke-opacity=".78"/>
<path d="M196.7 722.9 L207.3 724.4 L201.2 735.0Z" fill="rgba(60,60,200,.3)" stroke="#2b2b9c" stroke-width="6" stroke-linejoin="round" stroke-opacity=".78"/>
<path d="M552.1 657.9 L564.2 653.3 L580.8 653.3 L579.3 657.9 L558.2 664.5Z" fill="rgba(60,60,200,.3)" stroke="#2b2b9c" stroke-width="6" stroke-linejoin="round" stroke-opacity=".78"/>
<!--/MAP-->
</svg>
</div>

<!--MARKERS-->
<div class="ball" style="left:405px;top:387px"></div>
<div class="ball" style="left:735px;top:379px"></div>
<div class="ball" style="left:981px;top:135px"></div>
<div class="ball" style="left:711px;top:545px"></div>
<div class="ball" style="left:857px;top:657px"></div>
<div class="ball" style="left:977px;top:675px"></div>
<div class="ball" style="left:203px;top:680px"></div>
<div class="ball" style="left:491px;top:828px"></div>
<div class="ball" style="left:1095px;top:575px"></div>
<div class="cl" style="left:511px;top:435px">14</div>
<div class="cl" style="left:651px;top:443px">19</div>
<div class="cl" style="left:949px;top:423px">12</div>
<div class="cl" style="left:1051px;top:497px">2</div>
<div class="cl" style="left:317px;top:485px">3</div>
<div class="cl" style="left:531px;top:567px">6</div>
<div class="cl" style="left:307px;top:605px">3</div>
<div class="cl" style="left:477px;top:613px">3</div>
<div class="cl" style="left:745px;top:715px">2</div>
<div class="cl" style="left:545px;top:751px">17</div>
<div class="cl" style="left:321px;top:803px">5</div>
<div class="cl" style="left:731px;top:825px">8</div>
<div class="cl" style="left:825px;top:865px">3</div>
<div class="cl" style="left:607px;top:877px">202</div>
<div class="cl" style="left:213px;top:911px">3</div>
<div class="cl" style="left:67px;top:953px">2</div>
<div class="cl" style="left:341px;top:949px">22</div>
<div class="cl" style="left:515px;top:953px">64</div>
<div class="cl" style="left:645px;top:1049px">2</div>
<div class="cl" style="left:249px;top:1089px">5</div>
<div class="cl" style="left:125px;top:1109px">3</div>
<div class="cl" style="left:203px;top:1159px">2</div>
<!--/MARKERS-->
<!--CONTROLS-->
<!-- left controls -->
<div class="ctl" style="top:118px;height:144px;border-radius:8px;box-shadow:0 0 0 1px rgba(0,0,0,.18),0 1px 4px rgba(0,0,0,.3)">
  <svg width="72" height="144" viewBox="0 0 72 144">
    <rect x="0" y="71" width="72" height="1.5" fill="#ccc"/>
    <path d="M24 39.5H49M36.5 27V52" stroke="#000" stroke-width="4.6" fill="none"/>
    <path d="M24 112H49" stroke="#000" stroke-width="4.2" fill="none"/>
  </svg>
</div>
<div class="ctl" style="top:286px">
  <svg width="72" height="72" viewBox="0 0 72 72">
    <circle cx="31" cy="31" r="15" fill="none" stroke="#464646" stroke-width="7"/>
    <path d="M42 42L57 57" stroke="#464646" stroke-width="8" fill="none"/>
  </svg>
</div>
<div class="ctl" style="top:382px">
  <svg width="72" height="72" viewBox="0 0 72 72">
    <path d="M17 30V17H30M42 17H55V30M55 42V55H42M30 55H17V42" stroke="#464646" stroke-width="6" fill="none"/>
  </svg>
</div>
<div class="ctl" style="top:478px">
  <svg width="72" height="72" viewBox="0 0 72 72">
    <circle cx="36" cy="36" r="21.5" fill="none" stroke="#464646" stroke-width="4.5"/>
    <path d="M44 26L27 36L44 46" stroke="#464646" stroke-width="4" fill="none"/>
    <circle cx="44" cy="26" r="5.2" fill="#464646"/><circle cx="27" cy="36" r="5.2" fill="#464646"/><circle cx="44" cy="46" r="5.2" fill="#464646"/>
  </svg>
</div>
<div class="ctl" style="top:574px">
  <svg width="72" height="72" viewBox="0 0 72 72">
    <path d="M36 12L58 24L36 36L14 24Z" fill="#464646"/>
    <path d="M14 34L36 46L58 34" stroke="#464646" stroke-width="5" fill="none"/>
    <path d="M14 44L36 56L58 44" stroke="#464646" stroke-width="5" fill="none"/>
  </svg>
</div>
<div class="ctl" style="top:670px">
  <svg width="72" height="72" viewBox="0 0 72 72">
    <circle cx="36" cy="36" r="20" fill="#464646"/>
    <circle cx="36" cy="25.5" r="3.4" fill="#fff"/>
    <rect x="33.2" y="31.5" width="5.6" height="15.5" fill="#fff"/>
  </svg>
</div>
<div class="abs" style="left:18px;top:764px;width:76px;height:50px;background:#666;border-radius:4px;z-index:20">
  <svg width="76" height="50" viewBox="0 0 76 50"><path d="M23 18H53L38 34Z" fill="#f0f0f0"/></svg>
</div>
<!-- scale -->
<div class="abs" style="left:18px;top:1184px;width:182px;height:35px;background:rgba(255,255,255,.55);border-left:4px solid #777;border-right:4px solid #777;border-bottom:4px solid #777;z-index:20;font-size:23px;color:#333;line-height:34px;padding-left:10px">5 km</div>
<div class="abs" style="left:18px;top:1219px;width:174px;height:40px;background:rgba(255,255,255,.55);border-left:4px solid #777;border-right:4px solid #777;z-index:20;font-size:23px;color:#333;line-height:36px;padding-left:10px">3 mi</div>
<svg class="abs" style="left:0;top:1246px;z-index:60" width="10" height="10" viewBox="0 0 10 10"><path d="M0 10V2Q1 9 8 10Z" fill="#000"/></svg>
<!--/CONTROLS-->
<!--PANEL-->
<div id="panel">
  <!-- thin strip at the top (scrolled content edge) -->
  <div class="abs" style="left:20px;top:0;width:756px;height:6px;background:#2d3235"></div>
  <div class="abs" style="left:20px;top:5px;width:756px;height:2px;background:#25292a"></div>
  <!-- fieldset container -->
  <div class="abs" style="left:20px;top:17px;width:756px;height:1060px;border-left:4.500px solid #74e0e0;border-radius:3px 0 0 0"></div>
  <div class="abs" style="left:25px;top:16px;width:751px;height:64px;background:#1e2020;border-radius:0 8px 0 0"></div>
  <div class="abs" style="left:775px;top:80px;width:2px;height:1000px;background:#2a2e2f"></div>
  <svg class="abs" style="left:36px;top:38px" width="22" height="20" viewBox="0 0 22 20"><path d="M1 1H20L10.5 19Z" fill="#fff"/></svg>
  <div class="abs" id="ptitle" style="left:63px;top:33px;font-size:28px;font-weight:bold;line-height:1;color:#fff;white-space:nowrap">Shape properties</div>
  <div class="hb" style="left:576px;background:#2a2e31"><svg width="56" height="48" viewBox="0 0 56 48"><path d="M33 14L23 24L33 34" stroke="#f2f2f2" stroke-width="4.5" fill="none"/></svg></div>
  <div class="hb" style="left:646px"><svg width="56" height="48" viewBox="0 0 56 48"><path d="M20.5 19L28 12L35.5 19M20.5 28L28 35L35.5 28" stroke="#f2f2f2" stroke-width="2.4" fill="none"/></svg></div>
  <div class="hb" style="left:716px"><svg width="56" height="48" viewBox="0 0 56 48"><path d="M19.5 15.5L36.5 32.5M36.5 15.5L19.5 32.5" stroke="#f2f2f2" stroke-width="2.2" fill="none"/></svg></div>

  <div class="lbl" id="l1" style="top:125px">color</div>
  <svg class="abs" style="left:109px;top:122px" width="36" height="36" viewBox="0 0 36 36"><circle cx="18" cy="18" r="15" fill="none" stroke="#f2f2f2" stroke-width="2.2"/><text x="18" y="27.5" text-anchor="middle" font-family="Liberation Sans" font-weight="bold" font-size="26" fill="#f2f2f2">?</text></svg>
  <div class="btn" id="b1" style="left:646px;top:96px;width:112px;height:72px;line-height:69px">clear</div>
  <div class="abs" style="left:40px;top:194px;width:718px;height:80px;background:#354d50;border:2px solid #1f2223"></div>
  <div class="abs" id="dsg" style="left:74px;top:223px;font-size:21.2px;letter-spacing:-.25px;line-height:1;color:#e8e8e8">DarkSlateGrey</div>

  <div class="sep" style="top:301px"></div>
  <div class="lbl" id="l2" style="top:343px">Icon shape</div>
  <div class="btn" id="b2" style="left:646px;top:314px;width:112px;height:72px;line-height:69px">clear</div>
  <div class="cell" style="left:40px;top:423px">Default</div>
  <div class="cell" style="left:263px;top:423px">Circle</div>
  <div class="cell" style="left:486px;top:423px">Large Circle</div>
  <div class="cell" style="left:40px;top:486px">Drop</div>
  <div class="cell" style="left:263px;top:486px;background:#a0dbd9;color:#3a4a4b">Ball</div>
  <div class="cell" style="left:486px;top:486px">None</div>

  <div class="sep" style="top:578px"></div>
  <div class="lbl" id="l3" style="top:619px">Icon size</div>
  <div class="btn" style="left:632px;top:590px;width:126px;height:72px;line-height:68px">define</div>
  <div class="sep" style="top:700px"></div>
  <div class="lbl" id="l4" style="top:741px">Icon symbol</div>
  <div class="btn" style="left:632px;top:712px;width:126px;height:72px;line-height:68px">define</div>
  <div class="sep" style="top:822px"></div>
  <div class="lbl" id="l5" style="top:863px">icon opacity</div>
  <div class="btn" style="left:632px;top:834px;width:126px;height:72px;line-height:68px">define</div>
  <div class="sep" style="top:944px"></div>
  <div class="lbl" id="l6" style="top:985px">opacity</div>
  <div class="btn" style="left:632px;top:956px;width:126px;height:72px;line-height:68px">define</div>
</div>
<!--/PANEL-->
<!--TOOLBARS-->
<div class="tb" style="top:116px;height:296px">
  <svg width="72" height="296" viewBox="0 0 72 296">
    <!-- marker -->
    <path d="M36 17C27 17 20 24 20 33C20 44 31 55 36 64C41 55 52 44 52 33C52 24 45 17 36 17Z" fill="#f0f0f0"/>
    <circle cx="36" cy="32.5" r="8.3" fill="#2a2e31"/>
    <!-- polyline -->
    <path d="M22 92L50 102L30 132" stroke="#f0f0f0" stroke-width="2.6" fill="none"/>
    <g fill="#2a2e31" stroke="#f0f0f0" stroke-width="2.2"><rect x="18" y="88" width="8" height="8"/><rect x="46" y="98" width="8" height="8"/><rect x="26" y="128" width="8" height="8"/></g>
    <!-- polygon -->
    <path d="M24 166L52 176L48 200L20 202Z" fill="#f0f0f0"/>
    <g fill="#2a2e31" stroke="#f0f0f0" stroke-width="2.2"><rect x="20" y="162" width="8" height="8"/><rect x="48" y="172" width="8" height="8"/><rect x="44" y="196" width="8" height="8"/><rect x="16" y="198" width="8" height="8"/></g>
    <!-- curve -->
    <path d="M49 236C36 238 22 245 21 254C20 264 44 262 47 272C49 279 36 276 22 276" stroke="#f0f0f0" stroke-width="2.6" fill="none"/>
    <g fill="#2a2e31" stroke="#f0f0f0" stroke-width="2.2"><rect x="45" y="232" width="8" height="8"/><rect x="18" y="272" width="8" height="8"/></g>
  </svg>
</div>
<div class="tb" style="top:432px;height:584px">
  <div class="abs" style="left:0;top:216px;width:72px;height:72px;background:#3f4647"></div>
  <svg class="abs" style="left:0;top:0" width="72" height="584" viewBox="0 0 72 584">
    <!-- info -->
    <circle cx="36" cy="38.5" r="20" fill="#f0f0f0"/><circle cx="36" cy="28.5" r="3.6" fill="#2a2e31"/><rect x="33.4" y="35" width="5.2" height="16" fill="#2a2e31"/>
    <!-- upload -->
    <circle cx="36" cy="112" r="24" fill="#f0f0f0"/><path d="M36 98L50 112H40.5V124H31.5V112H22Z" fill="#2a2e31"/>
    <!-- dashboard -->
    <g fill="#f4f4f4"><rect x="16" y="166" width="18" height="22" rx="2"/><rect x="38" y="166" width="18" height="9" rx="2"/><rect x="38" y="179" width="18" height="23" rx="2"/><rect x="16" y="192" width="18" height="10" rx="2"/></g>
    <!-- layers -->
    <path d="M36 232L58 244L36 256L14 244Z" fill="#f0f0f0"/>
    <path d="M14.5 254L36 266L57.500 254" stroke="#f0f0f0" stroke-width="4" fill="none"/>
    <path d="M14.5 264.500L36 276.500L57.500 264.500" stroke="#f0f0f0" stroke-width="4" fill="none"/>
    <!-- tilelayer -->
    <rect x="25" y="318" width="34" height="32" fill="none" stroke="#f0f0f0" stroke-width="3.4"/>
    <rect x="13" y="305" width="33" height="33" fill="#c9e3b4" stroke="#f0f0f0" stroke-width="3.4"/>
    <path d="M30 307C36 312 40 322 38 336H44V320C44 312 40 308 36 307Z" fill="#aad3df"/>
    <path d="M22 336C20 326 30 320 27 307" stroke="#e0803f" stroke-width="1.6" fill="none"/>
    <!-- center arrows -->
    <circle cx="33" cy="402.500" r="6.500" fill="#f0f0f0"/>
    <path d="M55 378L59 382L46.500 394.500L42.500 390.500Z" fill="#f0f0f0"/>
    <path d="M39 380V398H57Z" fill="#f0f0f0"/>
    <path d="M10.500 422L23 409.500L27 413.500L14.500 426Z" fill="#f0f0f0"/>
    <path d="M13 407.500H28.500V423Z" fill="#f0f0f0"/>
    <!-- key -->
    <path d="M24 460a12 12 0 1 0 0 24c5 0 9-3 11-7l4 0 3-3 3 3 3-3 3 3 3-3 3 0 3-4-4-4H35c-2-4-6-6-11-6Z" fill="#f0f0f0"/>
    <circle cx="19" cy="472" r="3.3" fill="#2a2e31"/>
    <!-- gear -->
    <g transform="translate(36 544)" fill="#f0f0f0">
      <circle r="18"/>
      <g><rect x="-5" y="-24.500" width="10" height="49" rx="1"/><rect x="-5" y="-24.500" width="10" height="49" rx="1" transform="rotate(45)"/><rect x="-5" y="-24.500" width="10" height="49" rx="1" transform="rotate(90)"/><rect x="-5" y="-24.500" width="10" height="49" rx="1" transform="rotate(135)"/></g>
      <circle r="6.800" fill="#2a2e31"/>
    </g>
  </svg>
</div>
<!--/TOOLBARS-->

<div id="attr">map data © <u class="lk">OpenStreetMap contributors</u> under ODbL — Data curtesy of the City of Toronto Open Data portal, and licensed under the Open Government Licence – Toronto. <span class="lk">— Open<br>caption — Powered by uMap</span></div>
</body>
</html>
